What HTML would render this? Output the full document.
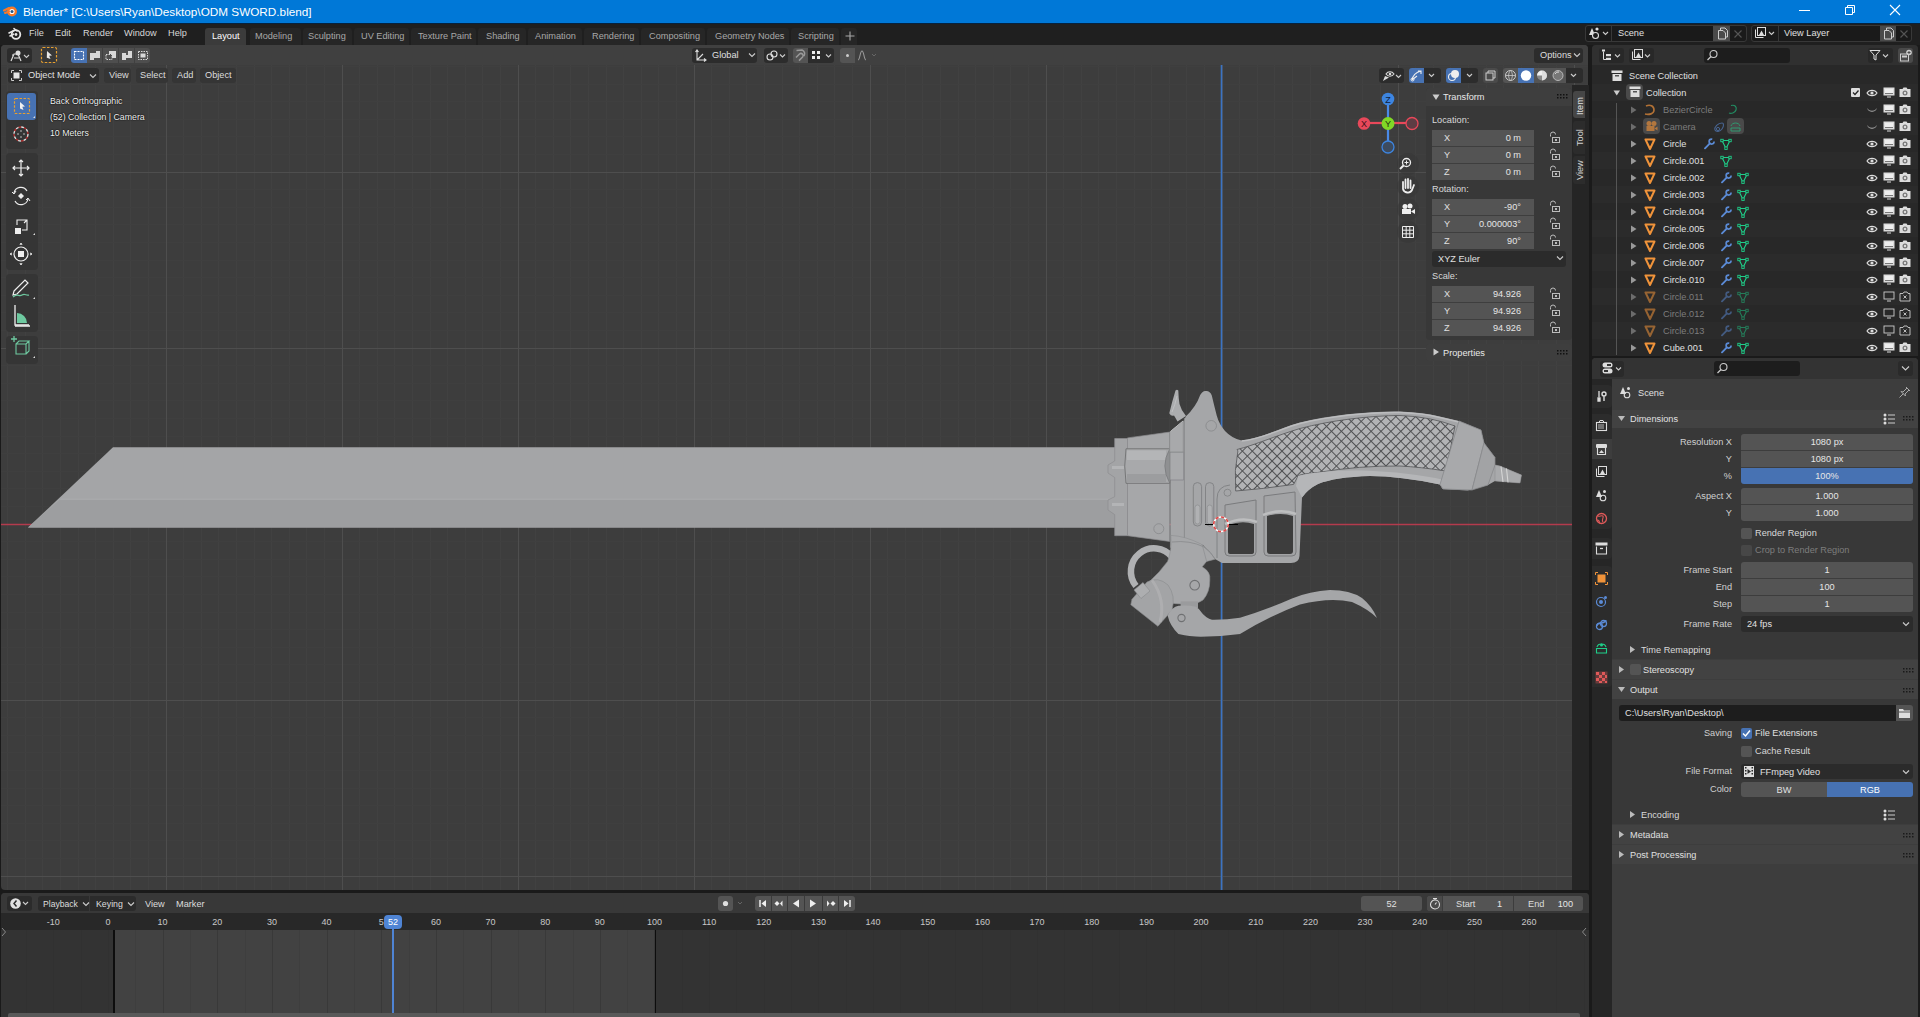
<!DOCTYPE html>
<html><head><meta charset="utf-8">
<style>
*{margin:0;padding:0;box-sizing:border-box}
html,body{width:1920px;height:1017px;overflow:hidden;background:#1a1a1a;font-family:"Liberation Sans",sans-serif;font-size:9.2px;color:#d9d9d9}
.a{position:absolute}
.t{position:absolute;white-space:nowrap;line-height:12px;-webkit-font-smoothing:antialiased}
</style></head><body>
<!-- title bar -->
<div class="a" style="left:0;top:0;width:1920px;height:23px;background:#0078d7"></div>
<svg class="a" style="left:3px;top:3px" width="16" height="16" viewBox="0 0 16 16"><circle cx="9" cy="8.5" r="5" fill="#f5792a"/><circle cx="9" cy="8.5" r="2.6" fill="#fff"/><circle cx="9" cy="8.5" r="1.5" fill="#265787"/><path d="M1 7.5L6 5M2 10L6 8.5" stroke="#f5792a" stroke-width="2" stroke-linecap="round"/></svg>
<div class="t" style="left:23px;top:4px;font-size:11.75px;line-height:15px;color:#fff">Blender* [C:\Users\Ryan\Desktop\ODM SWORD.blend]</div>
<div class="a" style="left:1799px;top:10px;width:11px;height:1px;background:#fff"></div>
<svg class="a" style="left:1843px;top:4px" width="12" height="12"><path d="M2.5 3.5H9.5V10.5H2.5ZM4.5 3.5V1.5H11.5V8.5H9.5" stroke="#fff" fill="none" stroke-width="1"/></svg>
<svg class="a" style="left:1889px;top:4px" width="12" height="12"><path d="M1 1L11 11M11 1L1 11" stroke="#fff" stroke-width="1.1"/></svg>
<!-- top bar -->
<div class="a" style="left:0;top:23px;width:1920px;height:22px;background:#1f1f1f"></div>
<svg class="a" style="left:8px;top:27px" width="14" height="13" viewBox="0 0 14 13"><circle cx="8" cy="7.5" r="4.3" fill="none" stroke="#e6e6e6" stroke-width="1.8"/><circle cx="8" cy="7.5" r="1.4" fill="#e6e6e6"/><path d="M1 6L6 3.5M2 9L5.5 7.2M6 1.5L9 4" stroke="#e6e6e6" stroke-width="1.6" stroke-linecap="round"/></svg>
<div class="t" style="left:29px;top:27px;color:#d8d8d8">File</div>
<div class="t" style="left:55px;top:27px;color:#d8d8d8">Edit</div>
<div class="t" style="left:83px;top:27px;color:#d8d8d8">Render</div>
<div class="t" style="left:124px;top:27px;color:#d8d8d8">Window</div>
<div class="t" style="left:168px;top:27px;color:#d8d8d8">Help</div>
<div class="a" style="left:250px;top:28px;width:51px;height:17px;background:#262626;border-radius:3px 3px 0 0"></div><div class="a" style="left:303px;top:28px;width:49px;height:17px;background:#262626;border-radius:3px 3px 0 0"></div><div class="a" style="left:354px;top:28px;width:55px;height:17px;background:#262626;border-radius:3px 3px 0 0"></div><div class="a" style="left:411px;top:28px;width:65px;height:17px;background:#262626;border-radius:3px 3px 0 0"></div><div class="a" style="left:478px;top:28px;width:48px;height:17px;background:#262626;border-radius:3px 3px 0 0"></div><div class="a" style="left:528px;top:28px;width:54px;height:17px;background:#262626;border-radius:3px 3px 0 0"></div><div class="a" style="left:584px;top:28px;width:55px;height:17px;background:#262626;border-radius:3px 3px 0 0"></div><div class="a" style="left:641px;top:28px;width:64px;height:17px;background:#262626;border-radius:3px 3px 0 0"></div><div class="a" style="left:707px;top:28px;width:82px;height:17px;background:#262626;border-radius:3px 3px 0 0"></div><div class="a" style="left:791px;top:28px;width:48px;height:17px;background:#262626;border-radius:3px 3px 0 0"></div><div class="a" style="left:841px;top:28px;width:16px;height:17px;background:#262626;border-radius:3px 3px 0 0"></div>
<div class="a" style="left:205px;top:28px;width:41px;height:17px;background:#3b3b3b;border-radius:3px 3px 0 0"></div>
<div class="a" style="left:0;top:23px;width:1920px;height:1px;background:#05223f"></div>
<div class="t" style="left:212px;top:30px;color:#fff">Layout</div>
<div class="t" style="left:255px;top:30px;color:#a8a8a8">Modeling</div>
<div class="t" style="left:308px;top:30px;color:#a8a8a8">Sculpting</div>
<div class="t" style="left:361px;top:30px;color:#a8a8a8">UV Editing</div>
<div class="t" style="left:418px;top:30px;color:#a8a8a8">Texture Paint</div>
<div class="t" style="left:486px;top:30px;color:#a8a8a8">Shading</div>
<div class="t" style="left:535px;top:30px;color:#a8a8a8">Animation</div>
<div class="t" style="left:592px;top:30px;color:#a8a8a8">Rendering</div>
<div class="t" style="left:649px;top:30px;color:#a8a8a8">Compositing</div>
<div class="t" style="left:715px;top:30px;color:#a8a8a8">Geometry Nodes</div>
<div class="t" style="left:798px;top:30px;color:#a8a8a8">Scripting</div>
<svg class="a" style="left:844px;top:30px" width="12" height="12"><path d="M6 1.5V10.5M1.5 6H10.5" stroke="#a8a8a8" stroke-width="1.1"/></svg>
<!-- scene selector -->
<div class="a" style="left:1585px;top:25px;width:162px;height:17px;background:#1a1a1a;border:1px solid #383838;border-radius:3px"></div>
<div class="a" style="left:1611px;top:26px;width:1px;height:15px;background:#383838"></div>
<div class="a" style="left:1713px;top:26px;width:17px;height:15px;background:#4a4a4a"></div>
<div class="t" style="left:1618px;top:27px;color:#e0e0e0">Scene</div>
<div class="a" style="left:1751px;top:25px;width:161px;height:17px;background:#1a1a1a;border:1px solid #383838;border-radius:3px"></div>
<div class="a" style="left:1778px;top:26px;width:1px;height:15px;background:#383838"></div>
<div class="a" style="left:1880px;top:26px;width:16px;height:15px;background:#4a4a4a"></div>
<div class="t" style="left:1784px;top:27px;color:#e0e0e0">View Layer</div>
<svg class="a" style="left:1587px;top:26px" width="24" height="15"><path d="M5 2L2 9H8Z" fill="#ddd"/><circle cx="10" cy="3" r="1.6" fill="#ddd"/><circle cx="8.5" cy="9.5" r="3" fill="#1a1a1a" stroke="#ddd" stroke-width="1.1"/><path d="M16 6L18.5 8.5L21 6" stroke="#ccc" stroke-width="1.1" fill="none"/></svg>
<svg class="a" style="left:1715px;top:27px" width="14" height="13"><path d="M3.5 3.5H8L10.5 6V12H3.5Z" fill="none" stroke="#ccc"/><path d="M5.5 3.5V1H10L12.5 3.5V10H10.5" stroke="#ccc" fill="none"/></svg>
<svg class="a" style="left:1733px;top:29px" width="10" height="10"><path d="M1.5 1.5L8.5 8.5M8.5 1.5L1.5 8.5" stroke="#555" stroke-width="1.1"/></svg>
<svg class="a" style="left:1753px;top:26px" width="24" height="15"><rect x="4.5" y="1.5" width="8" height="8" fill="none" stroke="#ddd"/><path d="M6 9L8.5 4.5L11 9Z" fill="#ddd"/><path d="M2.5 3.5V11.5H10.5" stroke="#ddd" fill="none"/><path d="M16 6L18.5 8.5L21 6" stroke="#ccc" stroke-width="1.1" fill="none"/></svg>
<svg class="a" style="left:1881px;top:27px" width="14" height="13"><path d="M3.5 3.5H8L10.5 6V12H3.5Z" fill="none" stroke="#ccc"/><path d="M5.5 3.5V1H10L12.5 3.5V10H10.5" stroke="#ccc" fill="none"/></svg>
<svg class="a" style="left:1899px;top:29px" width="10" height="10"><path d="M1.5 1.5L8.5 8.5M8.5 1.5L1.5 8.5" stroke="#555" stroke-width="1.1"/></svg>

<!-- viewport area -->
<div class="a" id="vp" style="left:1px;top:45px;width:1587px;height:845px;background:#3d3d3d;border-radius:4px;overflow:hidden">
<svg class="a" style="left:-1px;top:-45px" width="1590" height="900">
<path d="M7.6 0V900M25.2 0V900M42.8 0V900M60.4 0V900M78.0 0V900M95.6 0V900M113.2 0V900M130.8 0V900M148.4 0V900M166.0 0V900M183.6 0V900M201.2 0V900M218.8 0V900M236.4 0V900M254.0 0V900M271.6 0V900M289.2 0V900M306.8 0V900M324.4 0V900M342.0 0V900M359.6 0V900M377.2 0V900M394.8 0V900M412.4 0V900M430.0 0V900M447.6 0V900M465.2 0V900M482.8 0V900M500.4 0V900M518.0 0V900M535.6 0V900M553.2 0V900M570.8 0V900M588.4 0V900M606.0 0V900M623.6 0V900M641.2 0V900M658.8 0V900M676.4 0V900M694.0 0V900M711.6 0V900M729.2 0V900M746.8 0V900M764.4 0V900M782.0 0V900M799.6 0V900M817.2 0V900M834.8 0V900M852.4 0V900M870.0 0V900M887.6 0V900M905.2 0V900M922.8 0V900M940.4 0V900M958.0 0V900M975.6 0V900M993.2 0V900M1010.8 0V900M1028.4 0V900M1046.0 0V900M1063.6 0V900M1081.2 0V900M1098.8 0V900M1116.4 0V900M1134.0 0V900M1151.6 0V900M1169.2 0V900M1186.8 0V900M1204.4 0V900M1222.0 0V900M1239.6 0V900M1257.2 0V900M1274.8 0V900M1292.4 0V900M1310.0 0V900M1327.6 0V900M1345.2 0V900M1362.8 0V900M1380.4 0V900M1398.0 0V900M1415.6 0V900M1433.2 0V900M1450.8 0V900M1468.4 0V900M1486.0 0V900M1503.6 0V900M1521.2 0V900M1538.8 0V900M1556.4 0V900M1574.0 0V900" stroke="#414141" stroke-width="1" fill="none" shape-rendering="crispEdges"/>
<path d="M0 13.6H1590M0 31.2H1590M0 48.8H1590M0 66.4H1590M0 84.0H1590M0 101.6H1590M0 119.2H1590M0 136.8H1590M0 154.4H1590M0 172.0H1590M0 189.6H1590M0 207.2H1590M0 224.8H1590M0 242.4H1590M0 260.0H1590M0 277.6H1590M0 295.2H1590M0 312.8H1590M0 330.4H1590M0 348.0H1590M0 365.6H1590M0 383.2H1590M0 400.8H1590M0 418.4H1590M0 436.0H1590M0 453.6H1590M0 471.2H1590M0 488.8H1590M0 506.4H1590M0 524.0H1590M0 541.6H1590M0 559.2H1590M0 576.8H1590M0 594.4H1590M0 612.0H1590M0 629.6H1590M0 647.2H1590M0 664.8H1590M0 682.4H1590M0 700.0H1590M0 717.6H1590M0 735.2H1590M0 752.8H1590M0 770.4H1590M0 788.0H1590M0 805.6H1590M0 823.2H1590M0 840.8H1590M0 858.4H1590M0 876.0H1590M0 893.6H1590" stroke="#3f3f3f" stroke-width="1" fill="none" shape-rendering="crispEdges"/>
<path d="M1574 0V900M1398 0V900M1222 0V900M1046 0V900M870 0V900M694 0V900M518 0V900M342 0V900M166 0V900M0 876H1590M0 700H1590M0 524H1590M0 348H1590M0 172H1590" stroke="#4e4e4e" stroke-width="1" fill="none" shape-rendering="crispEdges"/>
<path d="M0 524.5H1590" stroke="#b33b4d" stroke-width="1.6"/>
<path d="M1221.5 0V900" stroke="#3a73c4" stroke-width="1.6"/>
<defs><pattern id="chk" width="7" height="7" patternUnits="userSpaceOnUse" patternTransform="rotate(45)"><path d="M0 0.5H7M0.5 0V7" stroke="#505153" stroke-width="1"/></pattern></defs>
<g id="sword">
<!-- blade -->
<path d="M28 527.5L113 447.3H1118V527.5Z" fill="#a4a5a7"/>
<path d="M28 527.5L60 499.5H1118V527.5Z" fill="#9d9ea0"/>
<path d="M61 498.5H1118V500H59.5Z" fill="#a8a9ab"/>
<!-- guard plate -->
<path d="M1114.7 438.5H1127.5V535.7H1114.7V514.6L1108 510L1108 500L1114.7 496.7V477.5L1108 473L1108 465L1114.7 461Z" fill="#a3a4a6" stroke="#8c8d8f" stroke-width="0.7"/>
<path d="M1112 466H1124V469H1112ZM1112 503H1124V506H1112Z" fill="#b3b4b6"/>
<!-- rear block -->
<path d="M1127.5 437.9L1169.7 432.1V541.4L1127.5 535.7Z" fill="#a6a7a9" stroke="#8c8d8f" stroke-width="0.7"/>
<!-- hook -->
<path d="M1169.3 413.2Q1172 402 1175.5 390.5Q1177 389 1178.3 390.5Q1178.5 398 1179.5 404Q1181 410 1186 416L1177.5 421.5Q1175 417 1174 415.5Q1171 416.5 1169.3 413.2Z" fill="#acadaf"/>
<path d="M1172 412Q1175 405 1177 396" stroke="#c0c1c3" stroke-width="1" fill="none"/>
<!-- main body + grip + trigger frame -->
<path d="M1183.5 421.3L1185.8 416.5Q1196 407 1200.2 395.1Q1203 390.5 1205.5 391Q1210 390.5 1211.8 395.5Q1214 405 1216.8 415.8Q1219 424 1225 431Q1232 438.5 1241.6 440.5C1262 438 1280 428 1300 422.5C1330 415 1370 411 1400 411.5Q1425 412.5 1437.5 416L1459 421L1481 430L1484 443L1495 457.5V465L1500 466L1521.5 475L1520 483L1495 481L1488 485L1467.5 490.5L1442.5 489L1440 484.5Q1400 476 1370 476Q1335 477 1318 484Q1308 489 1302 497.4L1299.5 556Q1299 563 1291 563H1222L1215 559Q1210 552 1203 545L1170.3 547.8V431.5Z" fill="#a5a6a8"/>
<!-- checker region -->
<path d="M1237 449.5C1255 445 1275 436 1300 428.5C1330 420.5 1370 415.5 1400 415.5Q1430 416.5 1455 426L1446 471Q1420 467 1400 466Q1360 465.5 1317.4 472.5Q1300 474 1298 476L1293.6 484.4Q1263 489 1235.7 491Q1234 470 1237.9 450.9Z" fill="#b2b3b5" stroke="#5e5f61" stroke-width="0.9"/>
<path d="M1237 449.5C1255 445 1275 436 1300 428.5C1330 420.5 1370 415.5 1400 415.5Q1430 416.5 1455 426L1446 471Q1420 467 1400 466Q1360 465.5 1317.4 472.5Q1300 474 1298 476L1293.6 484.4Q1263 489 1235.7 491Q1234 470 1237.9 450.9Z" fill="url(#chk)"/>
<!-- grip top highlight -->
<path d="M1241.6 441C1262 439 1280 429 1300 423.5C1330 416 1370 412 1400 412.5Q1425 413.5 1437.5 417L1459 422" stroke="#bcbdbf" stroke-width="1.4" fill="none"/>
<!-- lower sweep band -->
<path d="M1298 476Q1320 470 1362 470.5Q1410 472 1444 480L1440 484.5Q1400 476 1370 476Q1335 477 1318 484Q1308 489 1302 497.4L1296 486Z" fill="#b5b6b8"/>
<!-- pommel -->
<path d="M1459 421L1481 430L1484 443L1472 490L1443 489L1440 484.5Z" fill="#a8a9ab" stroke="#88898b" stroke-width="0.8"/>
<path d="M1484 443L1495 457.5V465L1488 485L1472 490Z" fill="#a2a3a5" stroke="#88898b" stroke-width="0.8"/>
<path d="M1495 465L1500 466L1521.5 475L1520 483L1495 481Z" fill="#a9aaac" stroke="#8a8b8d" stroke-width="0.5"/>
<path d="M1501 466.5L1503 482M1506.5 468.5L1508 482.5" stroke="#d5d5d5" stroke-width="1.1"/>
<!-- trigger guard windows -->
<path d="M1225 505L1256 500V552Q1256 556 1252 556H1229Q1225 556 1225 552Z" fill="#a2a3a5" stroke="#7a7b7d" stroke-width="1"/>
<path d="M1228 525Q1242 520 1254 524V552Q1254 554 1251 554H1230Q1228 554 1228 552Z" fill="#3d3d3d"/>
<path d="M1264 496L1295 492L1296 552Q1296 556 1292 556H1268Q1264 556 1264 552Z" fill="#a2a3a5" stroke="#7a7b7d" stroke-width="1"/>
<path d="M1267 516Q1281 512 1293 516V551Q1293 554 1290 554H1270Q1267 554 1267 551Z" fill="#3d3d3d"/>
<path d="M1225 524Q1242 516 1257 522M1263 515Q1281 508 1296 514" stroke="#bdbebf" stroke-width="2.5" fill="none"/>
<path d="M1217 558V499Q1217 486 1230 485" stroke="#7e7f81" stroke-width="0.9" fill="none"/>
<!-- cylinder -->
<path d="M1169.7 452H1183.7V480H1169.7Z" fill="#a9aaac" stroke="#85868a" stroke-width="0.8"/>
<path d="M1126 448.8H1169.7V483.3H1126Q1123.5 466 1126 448.8Z" fill="#a8a9ab" stroke="#6f7072" stroke-width="0.9"/>
<path d="M1127 450.5H1166V460H1127Z" fill="#b4b5b7"/>
<path d="M1127 474H1166V482H1127Z" fill="#9c9d9f"/>
<path d="M1169.7 449Q1160 466 1169.7 483" fill="#8f9092" stroke="#7a7b7d" stroke-width="0.8"/>
<path d="M1169.7 432.1L1183.3 421V452H1169.7Z" fill="#a8a9ab" stroke="#88898b" stroke-width="0.7"/>
<!-- body detail lines -->
<path d="M1184.4 418V547" stroke="#88898b" stroke-width="0.9" fill="none"/><path d="M1170.5 431.5L1183 421" stroke="#bdbebf" stroke-width="1" fill="none"/>
<rect x="1193.3" y="482.6" width="8.3" height="43.4" rx="4" fill="none" stroke="#7f8082" stroke-width="0.9"/>
<rect x="1205.5" y="482.6" width="8.3" height="43.4" rx="4" fill="none" stroke="#7f8082" stroke-width="0.9"/>
<rect x="1195" y="505" width="5" height="19" rx="2.5" fill="#b0b1b3" stroke="#88898b" stroke-width="0.6"/>
<rect x="1207.2" y="505" width="5" height="19" rx="2.5" fill="#b0b1b3" stroke="#88898b" stroke-width="0.6"/>
<circle cx="1211.2" cy="425.8" r="5.3" fill="none" stroke="#8a8b8d" stroke-width="0.9"/>
<circle cx="1158.8" cy="528.7" r="5" fill="none" stroke="#88898b" stroke-width="0.8"/>
<circle cx="1227.5" cy="492.7" r="3.5" fill="none" stroke="#7f8082" stroke-width="0.8"/>
<!-- ring -->
<path d="M1172 557A21 21 0 1 0 1136 586" fill="none" stroke="#b0b1b3" stroke-width="6.5"/>
<!-- lever housing lobe -->
<path d="M1170.9 535.4Q1185 536 1201 544Q1210 550 1215.2 559.2L1206.6 561.4L1202.2 566.8Q1211 572 1209.8 580Q1210 592 1203 600Q1194 606 1182 604Q1168 604 1158 598L1149 582Q1160 572 1167.6 561.4Q1172 550 1170.9 535.4Z" fill="#a6a7a9" stroke="#8d8e90" stroke-width="0.6"/>
<path d="M1172 542Q1190 540 1204 547Q1212 553 1215 559" stroke="#88898b" stroke-width="0.8" fill="none"/>
<path d="M1202 544L1206.6 561.4" stroke="#8d8e90" stroke-width="0.7" fill="none"/>
<circle cx="1194.7" cy="585.2" r="4.8" fill="none" stroke="#6f7072" stroke-width="1.1"/>
<!-- clamp block -->
<path d="M1132 599.3L1147 582Q1158 576 1168 585Q1176 596 1172 610L1166.5 616.6L1157.9 626.3L1130.8 604.7Z" fill="#a3a4a6" stroke="#8a8b8d" stroke-width="0.6"/>
<path d="M1152 580Q1166 600 1160 622" stroke="#b5b6b8" stroke-width="3" fill="none" opacity="0.6"/>
<path d="M1134 590L1143 582.5L1150 591L1141 598.5Z" fill="#adaeb0" stroke="#88898b" stroke-width="0.6"/>
<path d="M1180.6 601.4H1198V608H1180.6Z" fill="#9a9b9d"/>
<!-- lever -->
<path d="M1167.6 615.5Q1172 607 1178.4 605.8Q1188 605 1195.8 606.8Q1200 609 1202.2 613.3Q1206 618 1212 619.8Q1226 620 1240 617.7Q1266 610 1292 598.5Q1310 591 1330 590Q1350 590 1362 598Q1372 606 1377 618Q1368 609 1352 602Q1330 597 1300 604.5Q1272 615 1240 633.9Q1218 637 1195.8 636.6Q1182 635 1178.4 633.9Q1170 626 1167.6 615.5Z" fill="#a5a6a8"/>
<circle cx="1181.5" cy="618" r="3.6" fill="none" stroke="#6f7072" stroke-width="1.1"/>
<!-- 3d cursor -->
<circle cx="1221" cy="524.3" r="7.3" fill="none" stroke="#fff" stroke-width="1.5"/>
<circle cx="1221" cy="524.3" r="7.3" fill="none" stroke="#e04848" stroke-width="1.7" stroke-dasharray="3.2 2.5"/>
<path d="M1205 524.5H1213M1229 524.5H1238" stroke="#000" stroke-width="1.2"/>
</g>
</svg>
</div>
<!-- viewport header rows -->
<div class="a" style="left:1px;top:45px;width:1587px;height:20px;background:#404040;border-radius:4px 4px 0 0"></div>
<div class="a" style="left:7px;top:48px;width:25px;height:15px;background:#2c2c2c;border-radius:3px"></div>
<svg class="a" style="left:9px;top:49px" width="22" height="13"><path d="M2 12L5 5L9 5L12 12M5 9H10M3 6H4" stroke="#ddd" stroke-width="1.2" fill="none"/><circle cx="9" cy="4" r="2.5" fill="#ddd"/><path d="M15 6L17.5 8.5L20 6" stroke="#ccc" stroke-width="1.1" fill="none"/></svg>
<svg class="a" style="left:40px;top:46px" width="18" height="18"><rect x="1.5" y="1.5" width="15" height="15" rx="1.5" fill="#383838" stroke="#e8a030" stroke-width="1.2" stroke-dasharray="2.5 1.5"/><path d="M7 5L12 9.5L9.2 9.8L10.5 13L6.8 11.7L7 5Z" fill="#e8e8e8"/></svg>
<div class="a" style="left:71px;top:48px;width:16px;height:15px;background:#4772b3;border-radius:3px 0 0 3px"></div>
<div class="a" style="left:87px;top:48px;width:15px;height:15px;background:#4e4e4e"></div>
<div class="a" style="left:103px;top:48px;width:15px;height:15px;background:#4e4e4e"></div>
<div class="a" style="left:119px;top:48px;width:15px;height:15px;background:#4e4e4e"></div>
<div class="a" style="left:135px;top:48px;width:15px;height:15px;background:#4e4e4e;border-radius:0 3px 3px 0"></div>
<svg class="a" style="left:71px;top:48px" width="80" height="15"><rect x="3.5" y="3.5" width="9" height="8" fill="none" stroke="#fff" stroke-width="1.1" stroke-dasharray="2 1"/>
<path d="M19 5H25V3H29V10H23V12H19Z" fill="#d8d8d8"/>
<rect x="35" y="6.5" width="6" height="5" fill="none" stroke="#d8d8d8" stroke-dasharray="1.5 1"/><path d="M38 3H45V10H41V6H38Z" fill="#d8d8d8"/>
<path d="M51 5H57V3H61V10H55V12H51Z" fill="#d8d8d8"/><rect x="55" y="5" width="2" height="2" fill="#555"/>
<rect x="67.5" y="3.5" width="9" height="8" fill="none" stroke="#d8d8d8" stroke-dasharray="1.5 1"/><rect x="69.5" y="5.5" width="5" height="4" fill="#d8d8d8"/></svg>
<!-- transform orientation etc -->
<div class="a" style="left:692px;top:48px;width:65px;height:15px;background:#2c2c2c;border-radius:3px"></div>
<svg class="a" style="left:694px;top:49px" width="14" height="13"><path d="M3 1V11H12M3 11L9 5M1.5 3L3 1L4.5 3M10 9.5L12 11L10 12.5" stroke="#ddd" stroke-width="1.1" fill="none"/></svg>
<div class="t" style="left:712px;top:49px;color:#e0e0e0">Global</div>
<svg class="a" style="left:748px;top:52px" width="8" height="6"><path d="M1 1.5L4 4.5L7 1.5" stroke="#ccc" stroke-width="1.1" fill="none"/></svg>
<div class="a" style="left:764px;top:48px;width:24px;height:15px;background:#2c2c2c;border-radius:3px"></div>
<svg class="a" style="left:765px;top:49px" width="22" height="13"><circle cx="5" cy="8" r="3" fill="none" stroke="#ddd" stroke-width="1.1"/><circle cx="9" cy="5" r="3" fill="none" stroke="#ddd" stroke-width="1.1"/><path d="M15 5.5L17.5 8L20 5.5" stroke="#ccc" stroke-width="1.1" fill="none"/></svg>
<div class="a" style="left:793px;top:48px;width:15px;height:15px;background:#545454;border-radius:3px 0 0 3px"></div>
<svg class="a" style="left:794px;top:49px" width="13" height="13"><path d="M3 9.5L6.5 6A2.2 2.2 0 0 1 9.6 9.1L6 12.6M3.5 2.5L9 2A4 4 0 0 1 11 8" stroke="#999" stroke-width="1.5" fill="none" transform="translate(-1,-1)"/></svg>
<div class="a" style="left:808px;top:48px;width:26px;height:15px;background:#2c2c2c;border-radius:0 3px 3px 0"></div>
<svg class="a" style="left:810px;top:49px" width="24" height="13"><rect x="2" y="2" width="3" height="3" fill="#eee"/><rect x="7" y="2" width="3" height="3" fill="#eee"/><rect x="2" y="7" width="3" height="3" fill="#eee"/><rect x="7" y="7" width="3" height="3" fill="#eee"/><path d="M16 5.5L18.5 8L21 5.5" stroke="#ccc" stroke-width="1.1" fill="none"/></svg>
<div class="a" style="left:840px;top:48px;width:15px;height:15px;background:#545454;border-radius:3px 0 0 3px"></div>
<svg class="a" style="left:840px;top:48px" width="44" height="15"><circle cx="7.5" cy="7.5" r="1.5" fill="#ccc"/><path d="M18 12C20 12 20 3 22 3C24 3 24 12 26 12" stroke="#999" stroke-width="1.1" fill="none"/><path d="M32 6L34 8L36 6" stroke="#666" stroke-width="1" fill="none"/></svg>
<div class="a" style="left:1534px;top:48px;width:49px;height:15px;background:#2c2c2c;border-radius:3px"></div>
<div class="t" style="left:1540px;top:49px;color:#ddd">Options</div>
<svg class="a" style="left:1573px;top:52px" width="8" height="6"><path d="M1 1.5L4 4.5L7 1.5" stroke="#ccc" stroke-width="1.1" fill="none"/></svg>
<!-- row 2 -->
<div class="a" style="left:8px;top:68px;width:91px;height:15px;background:#2c2c2c;border-radius:3px"></div>
<svg class="a" style="left:10px;top:69px" width="13" height="13"><path d="M1.5 4V1.5H4M9 1.5H11.5V4M11.5 9V11.5H9M4 11.5H1.5V9" stroke="#ccc" fill="none"/><rect x="3.5" y="3.5" width="6" height="6" fill="#e6e6e6"/></svg>
<div class="t" style="left:28px;top:69px;color:#e0e0e0">Object Mode</div>
<svg class="a" style="left:89px;top:73px" width="8" height="6"><path d="M1 1.5L4 4.5L7 1.5" stroke="#ccc" stroke-width="1.1" fill="none"/></svg>
<div class="a" style="left:104px;top:68px;width:27px;height:15px;background:#353535;border-radius:3px"></div>
<div class="t" style="left:109px;top:69px;color:#ddd">View</div>
<div class="a" style="left:136px;top:68px;width:32px;height:15px;background:#353535;border-radius:3px"></div>
<div class="t" style="left:140px;top:69px;color:#ddd">Select</div>
<div class="a" style="left:172px;top:68px;width:24px;height:15px;background:#353535;border-radius:3px"></div>
<div class="t" style="left:177px;top:69px;color:#ddd">Add</div>
<div class="a" style="left:200px;top:68px;width:36px;height:15px;background:#353535;border-radius:3px"></div>
<div class="t" style="left:205px;top:69px;color:#ddd">Object</div>
<!-- right row2 -->
<div class="a" style="left:1379px;top:68px;width:25px;height:15px;background:#2c2c2c;border-radius:3px"></div>
<svg class="a" style="left:1380px;top:68px" width="24" height="15"><path d="M3 13L5 8L9 9.5Z" fill="#ddd"/><path d="M6 6C8 3 12 3 14 6C12 9 8 9 6 6Z" fill="none" stroke="#ddd" stroke-width="1.1"/><circle cx="10" cy="6" r="1.3" fill="#ddd"/><path d="M16 7L18.5 9.5L21 7" stroke="#ccc" stroke-width="1.1" fill="none"/></svg>
<div class="a" style="left:1409px;top:68px;width:15px;height:15px;background:#4772b3;border-radius:3px 0 0 3px"></div>
<div class="a" style="left:1424px;top:68px;width:17px;height:15px;background:#2c2c2c;border-radius:0 3px 3px 0"></div>
<svg class="a" style="left:1409px;top:68px" width="32" height="15"><path d="M3 12C4 7 8 4 12 3M9 3H12V6M3 12L8 8" stroke="#eee" stroke-width="1.1" fill="none"/><circle cx="3.5" cy="11.5" r="1.5" fill="none" stroke="#eee"/><path d="M20 6L22.5 8.5L25 6" stroke="#ccc" stroke-width="1.1" fill="none"/></svg>
<div class="a" style="left:1446px;top:68px;width:15px;height:15px;background:#4772b3;border-radius:3px 0 0 3px"></div>
<div class="a" style="left:1461px;top:68px;width:17px;height:15px;background:#2c2c2c;border-radius:0 3px 3px 0"></div>
<svg class="a" style="left:1446px;top:68px" width="32" height="15"><circle cx="9" cy="6" r="4" fill="#eee"/><circle cx="6" cy="9" r="3.5" fill="none" stroke="#eee" stroke-width="1.1"/><path d="M21 6L23.5 8.5L26 6" stroke="#ccc" stroke-width="1.1" fill="none"/></svg>
<div class="a" style="left:1483px;top:68px;width:15px;height:15px;background:#4a4a4a;border-radius:3px"></div>
<svg class="a" style="left:1483px;top:68px" width="15" height="15"><rect x="3" y="5" width="7" height="7" fill="none" stroke="#ccc"/><path d="M5 5V3H12V10H10" stroke="#ccc" fill="none"/></svg>
<div class="a" style="left:1503px;top:68px;width:15px;height:15px;background:#545454;border-radius:3px 0 0 3px"></div>
<div class="a" style="left:1518px;top:68px;width:16px;height:15px;background:#4772b3"></div>
<div class="a" style="left:1534px;top:68px;width:16px;height:15px;background:#545454"></div>
<div class="a" style="left:1550px;top:68px;width:16px;height:15px;background:#545454"></div>
<div class="a" style="left:1566px;top:68px;width:17px;height:15px;background:#2c2c2c;border-radius:0 3px 3px 0"></div>
<svg class="a" style="left:1503px;top:68px" width="80" height="15"><circle cx="7.5" cy="7.5" r="5" fill="none" stroke="#ccc"/><path d="M2.5 7.5H12.5M7.5 2.5C5 5 5 10 7.5 12.5M7.5 2.5C10 5 10 10 7.5 12.5" stroke="#ccc" fill="none" stroke-width="0.8"/>
<circle cx="23" cy="7.5" r="5.2" fill="#fff"/>
<circle cx="39" cy="7.5" r="5" fill="#888"/><path d="M39 2.5A5 5 0 0 1 39 12.5Z" fill="#ddd"/><path d="M39 2.5A5 5 0 0 0 34 7.5H39Z" fill="#eee"/>
<circle cx="55" cy="7.5" r="5" fill="#777" stroke="#ccc" stroke-width="0.8"/><path d="M52 6A3.5 3.5 0 0 1 56 4" stroke="#ddd" fill="none"/>
<path d="M68 6L70.5 8.5L73 6" stroke="#ccc" stroke-width="1.1" fill="none"/></svg>
<!-- toolbar -->
<div class="a" style="left:6px;top:91px;width:32px;height:58px;background:#353535;border-radius:4px"></div>
<div class="a" style="left:6px;top:153px;width:32px;height:117px;background:#353535;border-radius:4px"></div>
<div class="a" style="left:6px;top:274px;width:32px;height:58px;background:#353535;border-radius:4px"></div>
<div class="a" style="left:6px;top:336px;width:32px;height:28px;background:#353535;border-radius:4px"></div>
<div class="a" style="left:7px;top:93px;width:29px;height:27px;background:#4772b3;border-radius:3px"></div>
<svg class="a" style="left:0;top:85px" width="40" height="285">
<rect x="14.5" y="13.5" width="15" height="15" rx="1" fill="none" stroke="#e8a030" stroke-width="1.2" stroke-dasharray="2.5 1.5"/><path d="M20 17L25 21.5L22.3 21.8L23.5 25L20 23.5Z" fill="#f0f0f0"/><path d="M33 33L35 31V33Z" fill="#ddd"/>
<circle cx="21" cy="49" r="7" fill="none" stroke="#e0e0e0" stroke-width="1.3" stroke-dasharray="3 2.5"/><circle cx="21" cy="49" r="7" fill="none" stroke="#c03030" stroke-width="1.3" stroke-dasharray="2.5 3" stroke-dashoffset="2.7"/><path d="M21 45V47M21 51V53M17 49H19M23 49H25" stroke="#bbb"/>
<path d="M21 75V91M13 83H29M19 77L21 75L23 77M19 89L21 91L23 89M15 81L13 83L15 85M27 81L29 83L27 85" stroke="#eee" stroke-width="1.2" fill="none"/>
<path d="M14 108A7 7 0 0 1 27 106M28 114A7 7 0 0 1 15 116" stroke="#eee" stroke-width="1.2" fill="none"/><path d="M21 108L24 111L21 114L18 111Z" fill="#eee"/><path d="M12 107L14 109L16 106M26 115L28 113L30 116" stroke="#eee" fill="none"/>
<rect x="15" y="143" width="6" height="6" fill="#eee"/><path d="M17 140V135H27V145H22M24 138L27 135" stroke="#eee" stroke-width="1.1" fill="none"/><path d="M33 150L35 148V150Z" fill="#ddd"/>
<circle cx="21" cy="169" r="7" fill="none" stroke="#eee" stroke-width="1.2"/><rect x="18" y="166" width="6" height="6" fill="#eee"/><path d="M20 160L21 158L22 160M20 178L21 180L22 178M12 168L10 169L12 170M30 168L32 169L30 170" stroke="#eee" fill="none"/>
<path d="M14 206L25 195L28 198L17 209L13 210Z" fill="none" stroke="#eee" stroke-width="1.2"/><path d="M13 212C17 208 19 212 22 210C25 208 26 211 29 210" stroke="#6ec9a0" stroke-width="1.2" fill="none"/><path d="M33 214L35 212V214Z" fill="#ddd"/>
<path d="M15 220V240H29" stroke="#eee" stroke-width="1.3" fill="none"/><path d="M17 238V228A10 10 0 0 1 27 238Z" fill="#6ec9a0"/><path d="M15 241H30" stroke="#eee" stroke-width="1.5"/>
<path d="M16 259H26V269H16Z M16 259L19 256H29L26 259 M29 256V266L26 269" fill="none" stroke="#6ec9a0" stroke-width="1.1"/><path d="M14 251V257M11 254H17" stroke="#6ec9a0" stroke-width="1.3"/><path d="M33 273L35 271V273Z" fill="#ddd"/>
</svg>
<!-- overlay text -->
<div class="t" style="left:50px;top:95px;color:#f4f4f4;font-size:8.75px;text-shadow:0 0 1.5px #000,0 0 1px #000">Back Orthographic</div>
<div class="t" style="left:50px;top:111px;color:#f4f4f4;font-size:8.75px;text-shadow:0 0 1.5px #000,0 0 1px #000">(52) Collection | Camera</div>
<div class="t" style="left:50px;top:127px;color:#f4f4f4;font-size:8.75px;text-shadow:0 0 1.5px #000,0 0 1px #000">10 Meters</div>
<!-- nav gizmo -->
<svg class="a" style="left:1350px;top:88px" width="75" height="155">
<path d="M38 11V35M14 35H62" stroke="#d0d0d0" stroke-width="0"/>
<path d="M38 35V11" stroke="#4a8ae8" stroke-width="2.2"/>
<path d="M38 35V57" stroke="#4a8ae8" stroke-width="2.2"/>
<path d="M38 35H14" stroke="#e8485a" stroke-width="2.2"/>
<path d="M38 35H62" stroke="#e8485a" stroke-width="2.2"/>
<circle cx="38" cy="59" r="6" fill="#3d4b5e" stroke="#3d85e0" stroke-width="1.3"/>
<circle cx="62" cy="35.5" r="6" fill="#5e3d44" stroke="#e8485a" stroke-width="1.3"/>
<circle cx="38" cy="11" r="6.3" fill="#3d85e0"/>
<circle cx="14" cy="35.5" r="6.3" fill="#e8485a"/>
<circle cx="38" cy="35.5" r="6.5" fill="#80d826"/>
<text x="38" y="14.5" font-size="9" text-anchor="middle" fill="#10203a" font-family="Liberation Sans">Z</text>
<text x="14" y="39" font-size="9" text-anchor="middle" fill="#401018" font-family="Liberation Sans">X</text>
<text x="38" y="39" font-size="9" text-anchor="middle" fill="#203010" font-family="Liberation Sans">Y</text>
<g transform="translate(0,0)">
<circle cx="58" cy="76" r="11" fill="#363636" fill-opacity="0.5"/>
<circle cx="56.5" cy="74.5" r="4" fill="none" stroke="#eee" stroke-width="1.3"/><path d="M53.5 77.5L50 81" stroke="#eee" stroke-width="2"/><path d="M56.5 72.5V76.5M54.5 74.5H58.5" stroke="#eee"/>
<circle cx="58" cy="98.5" r="11" fill="#363636" fill-opacity="0.5"/>
<path d="M53 101V94M55.5 100V91.5M58 100V91M60.5 100V92.5M53 101C54 105 60 106 62 102L64 97" stroke="#eee" stroke-width="1.8" fill="none" stroke-linecap="round"/>
<circle cx="58" cy="121.5" r="11" fill="#363636" fill-opacity="0.5"/>
<circle cx="55" cy="118.5" r="2.5" fill="#eee"/><circle cx="60" cy="118" r="2.5" fill="#eee"/><rect x="52" y="121" width="9" height="5" fill="#eee"/><path d="M61 123.5L65 121V126Z" fill="#eee"/>
<circle cx="58" cy="144" r="11" fill="#363636" fill-opacity="0.5"/>
<path d="M52.5 138.5H63.5V149.5H52.5ZM52.5 142.2H63.5M52.5 145.8H63.5M56.2 138.5V149.5M59.8 138.5V149.5" stroke="#eee" fill="none"/>
</g>
</svg>
<!-- sidebar -->
<div class="a" style="left:1572px;top:85px;width:17px;height:805px;background:#252525"></div>
<div class="a" style="left:1573px;top:91px;width:12px;height:27px;background:#464646;border-radius:3px 0 0 3px"></div>
<div class="a" style="left:1573px;top:121px;width:12px;height:33px;background:#2c2c2c;border-radius:3px 0 0 3px"></div>
<div class="a" style="left:1573px;top:156px;width:12px;height:28px;background:#2c2c2c;border-radius:3px 0 0 3px"></div>
<div class="t" style="left:1573.5px;top:114.5px;color:#e0e0e0;transform:rotate(-90deg);transform-origin:0 0">Item</div>
<div class="t" style="left:1573.5px;top:145.5px;color:#d0d0d0;transform:rotate(-90deg);transform-origin:0 0">Tool</div>
<div class="t" style="left:1573.5px;top:179.5px;color:#d0d0d0;transform:rotate(-90deg);transform-origin:0 0">View</div>
<div class="a" style="left:1426px;top:88px;width:146px;height:252px;background:#383838;border-radius:4px"></div>
<div class="a" style="left:1426px;top:88px;width:146px;height:18px;background:#3e3e3e;border-radius:4px 4px 0 0"></div>
<svg class="a" style="left:1431px;top:92px" width="10" height="10"><path d="M1.5 2.5H8.5L5 8Z" fill="#ccc"/></svg>
<div class="t" style="left:1443px;top:91px;color:#e8e8e8">Transform</div>
<svg class="a" style="left:1556px;top:93px" width="14" height="8"><g fill="#111"><rect x="1" y="1" width="1.5" height="1.5"/><rect x="1" y="4" width="1.5" height="1.5"/><rect x="4" y="1" width="1.5" height="1.5"/><rect x="4" y="4" width="1.5" height="1.5"/><rect x="7" y="1" width="1.5" height="1.5"/><rect x="7" y="4" width="1.5" height="1.5"/><rect x="10" y="1" width="1.5" height="1.5"/><rect x="10" y="4" width="1.5" height="1.5"/></g></svg>
<div class="t" style="left:1432px;top:114px;color:#d8d8d8">Location:</div>
<div class="t" style="left:1432px;top:183px;color:#d8d8d8">Rotation:</div>
<div class="t" style="left:1432px;top:270px;color:#d8d8d8">Scale:</div>
<div class="a" style="left:1432px;top:130px;width:102px;height:16px;background:#545454"></div>
<div class="t" style="left:1444px;top:132px;color:#e0e0e0">X</div>
<div class="t" style="left:1434px;top:132px;width:87px;text-align:right;color:#e6e6e6">0 m</div>
<svg class="a" style="left:1548px;top:131px" width="13" height="13"><path d="M2.5 5.5V3.5A2.5 2.5 0 0 1 7.5 3.5" stroke="#bbb" fill="none" stroke-width="1"/><rect x="4.5" y="6.5" width="7" height="5" fill="none" stroke="#bbb"/><rect x="7" y="8" width="2" height="2" fill="#bbb"/></svg><div class="a" style="left:1432px;top:147px;width:102px;height:16px;background:#545454"></div>
<div class="t" style="left:1444px;top:149px;color:#e0e0e0">Y</div>
<div class="t" style="left:1434px;top:149px;width:87px;text-align:right;color:#e6e6e6">0 m</div>
<svg class="a" style="left:1548px;top:148px" width="13" height="13"><path d="M2.5 5.5V3.5A2.5 2.5 0 0 1 7.5 3.5" stroke="#bbb" fill="none" stroke-width="1"/><rect x="4.5" y="6.5" width="7" height="5" fill="none" stroke="#bbb"/><rect x="7" y="8" width="2" height="2" fill="#bbb"/></svg><div class="a" style="left:1432px;top:164px;width:102px;height:16px;background:#545454"></div>
<div class="t" style="left:1444px;top:166px;color:#e0e0e0">Z</div>
<div class="t" style="left:1434px;top:166px;width:87px;text-align:right;color:#e6e6e6">0 m</div>
<svg class="a" style="left:1548px;top:165px" width="13" height="13"><path d="M2.5 5.5V3.5A2.5 2.5 0 0 1 7.5 3.5" stroke="#bbb" fill="none" stroke-width="1"/><rect x="4.5" y="6.5" width="7" height="5" fill="none" stroke="#bbb"/><rect x="7" y="8" width="2" height="2" fill="#bbb"/></svg><div class="a" style="left:1432px;top:199px;width:102px;height:16px;background:#545454"></div>
<div class="t" style="left:1444px;top:201px;color:#e0e0e0">X</div>
<div class="t" style="left:1434px;top:201px;width:87px;text-align:right;color:#e6e6e6">-90°</div>
<svg class="a" style="left:1548px;top:200px" width="13" height="13"><path d="M2.5 5.5V3.5A2.5 2.5 0 0 1 7.5 3.5" stroke="#bbb" fill="none" stroke-width="1"/><rect x="4.5" y="6.5" width="7" height="5" fill="none" stroke="#bbb"/><rect x="7" y="8" width="2" height="2" fill="#bbb"/></svg><div class="a" style="left:1432px;top:216px;width:102px;height:16px;background:#545454"></div>
<div class="t" style="left:1444px;top:218px;color:#e0e0e0">Y</div>
<div class="t" style="left:1434px;top:218px;width:87px;text-align:right;color:#e6e6e6">0.000003°</div>
<svg class="a" style="left:1548px;top:217px" width="13" height="13"><path d="M2.5 5.5V3.5A2.5 2.5 0 0 1 7.5 3.5" stroke="#bbb" fill="none" stroke-width="1"/><rect x="4.5" y="6.5" width="7" height="5" fill="none" stroke="#bbb"/><rect x="7" y="8" width="2" height="2" fill="#bbb"/></svg><div class="a" style="left:1432px;top:233px;width:102px;height:16px;background:#545454"></div>
<div class="t" style="left:1444px;top:235px;color:#e0e0e0">Z</div>
<div class="t" style="left:1434px;top:235px;width:87px;text-align:right;color:#e6e6e6">90°</div>
<svg class="a" style="left:1548px;top:234px" width="13" height="13"><path d="M2.5 5.5V3.5A2.5 2.5 0 0 1 7.5 3.5" stroke="#bbb" fill="none" stroke-width="1"/><rect x="4.5" y="6.5" width="7" height="5" fill="none" stroke="#bbb"/><rect x="7" y="8" width="2" height="2" fill="#bbb"/></svg><div class="a" style="left:1432px;top:286px;width:102px;height:16px;background:#545454"></div>
<div class="t" style="left:1444px;top:288px;color:#e0e0e0">X</div>
<div class="t" style="left:1434px;top:288px;width:87px;text-align:right;color:#e6e6e6">94.926</div>
<svg class="a" style="left:1548px;top:287px" width="13" height="13"><path d="M2.5 5.5V3.5A2.5 2.5 0 0 1 7.5 3.5" stroke="#bbb" fill="none" stroke-width="1"/><rect x="4.5" y="6.5" width="7" height="5" fill="none" stroke="#bbb"/><rect x="7" y="8" width="2" height="2" fill="#bbb"/></svg><div class="a" style="left:1432px;top:303px;width:102px;height:16px;background:#545454"></div>
<div class="t" style="left:1444px;top:305px;color:#e0e0e0">Y</div>
<div class="t" style="left:1434px;top:305px;width:87px;text-align:right;color:#e6e6e6">94.926</div>
<svg class="a" style="left:1548px;top:304px" width="13" height="13"><path d="M2.5 5.5V3.5A2.5 2.5 0 0 1 7.5 3.5" stroke="#bbb" fill="none" stroke-width="1"/><rect x="4.5" y="6.5" width="7" height="5" fill="none" stroke="#bbb"/><rect x="7" y="8" width="2" height="2" fill="#bbb"/></svg><div class="a" style="left:1432px;top:320px;width:102px;height:16px;background:#545454"></div>
<div class="t" style="left:1444px;top:322px;color:#e0e0e0">Z</div>
<div class="t" style="left:1434px;top:322px;width:87px;text-align:right;color:#e6e6e6">94.926</div>
<svg class="a" style="left:1548px;top:321px" width="13" height="13"><path d="M2.5 5.5V3.5A2.5 2.5 0 0 1 7.5 3.5" stroke="#bbb" fill="none" stroke-width="1"/><rect x="4.5" y="6.5" width="7" height="5" fill="none" stroke="#bbb"/><rect x="7" y="8" width="2" height="2" fill="#bbb"/></svg><div class="a" style="left:1432px;top:146px;width:102px;height:1px;background:#3e3e3e"></div>
<div class="a" style="left:1432px;top:163px;width:102px;height:1px;background:#3e3e3e"></div>
<div class="a" style="left:1432px;top:215px;width:102px;height:1px;background:#3e3e3e"></div>
<div class="a" style="left:1432px;top:232px;width:102px;height:1px;background:#3e3e3e"></div>
<div class="a" style="left:1432px;top:302px;width:102px;height:1px;background:#3e3e3e"></div>
<div class="a" style="left:1432px;top:319px;width:102px;height:1px;background:#3e3e3e"></div>
<div class="a" style="left:1432px;top:251px;width:134px;height:16px;background:#2b2b2b;border-radius:3px"></div>
<div class="t" style="left:1438px;top:253px;color:#e0e0e0">XYZ Euler</div>
<svg class="a" style="left:1556px;top:255px" width="8" height="6"><path d="M1 1.5L4 4.5L7 1.5" stroke="#ccc" stroke-width="1.1" fill="none"/></svg>
<div class="a" style="left:1426px;top:344px;width:146px;height:17px;background:#3e3e3e;border-radius:4px"></div>
<svg class="a" style="left:1431px;top:347px" width="10" height="10"><path d="M2.5 1.5V8.5L8 5Z" fill="#ccc"/></svg>
<div class="t" style="left:1443px;top:347px;color:#e8e8e8">Properties</div>
<svg class="a" style="left:1556px;top:349px" width="14" height="8"><g fill="#111"><rect x="1" y="1" width="1.5" height="1.5"/><rect x="1" y="4" width="1.5" height="1.5"/><rect x="4" y="1" width="1.5" height="1.5"/><rect x="4" y="4" width="1.5" height="1.5"/><rect x="7" y="1" width="1.5" height="1.5"/><rect x="7" y="4" width="1.5" height="1.5"/><rect x="10" y="1" width="1.5" height="1.5"/><rect x="10" y="4" width="1.5" height="1.5"/></g></svg>

<!-- outliner -->
<div class="a" style="left:1592px;top:45px;width:326px;height:311px;background:#282828;border-radius:4px;overflow:hidden"></div>
<div class="a" style="left:1592px;top:45px;width:326px;height:20px;background:#303030;border-radius:4px 4px 0 0"></div>
<div class="a" style="left:1599px;top:48px;width:25px;height:15px;background:#282828;border-radius:3px"></div>
<svg class="a" style="left:1601px;top:49px" width="22" height="13"><rect x="1" y="0.5" width="3" height="2" fill="#ddd"/><path d="M2.5 2.5V10.5H5" stroke="#ddd" fill="none"/><rect x="5" y="5" width="5" height="2.2" fill="#ddd"/><rect x="5" y="8.8" width="5" height="2.2" fill="#ddd"/><path d="M14 5.5L16.5 8L19 5.5" stroke="#ccc" stroke-width="1.1" fill="none"/></svg>
<div class="a" style="left:1629px;top:48px;width:25px;height:15px;background:#282828;border-radius:3px"></div>
<svg class="a" style="left:1631px;top:49px" width="22" height="13"><rect x="3.5" y="0.5" width="8" height="8" fill="none" stroke="#ddd"/><path d="M5 8L7.5 3.5L10 8Z" fill="#ddd"/><path d="M1.5 2.5V10.5H9.5" stroke="#ddd" fill="none"/><path d="M14 5.5L16.5 8L19 5.5" stroke="#ccc" stroke-width="1.1" fill="none"/></svg>
<div class="a" style="left:1704px;top:48px;width:86px;height:15px;background:#1d1d1d;border-radius:3px"></div>
<svg class="a" style="left:1706px;top:49px" width="13" height="13"><circle cx="7.5" cy="5" r="3.5" fill="none" stroke="#ccc" stroke-width="1.1"/><path d="M5 7.5L1.5 11" stroke="#ccc" stroke-width="1.2"/></svg>
<div class="a" style="left:1868px;top:48px;width:25px;height:15px;background:#282828;border-radius:3px"></div>
<svg class="a" style="left:1869px;top:49px" width="22" height="13"><path d="M1 1.5H11L7 6V11L5 10V6Z" fill="none" stroke="#ddd" stroke-width="1"/><path d="M14 5.5L16.5 8L19 5.5" stroke="#ccc" stroke-width="1.1" fill="none"/></svg>
<div class="a" style="left:1898px;top:48px;width:15px;height:15px;background:#4a4a4a;border-radius:3px"></div>
<svg class="a" style="left:1899px;top:49px" width="13" height="13"><rect x="1.5" y="5" width="8" height="7" fill="none" stroke="#ccc"/><rect x="3" y="6.5" width="5" height="2" fill="#ccc"/><circle cx="10" cy="3.5" r="2.8" fill="#ccc"/><path d="M10 2V5M8.5 3.5H11.5" stroke="#4a4a4a"/></svg>
<div class="a" style="left:1592px;top:67px;width:326px;height:17px;background:#282828"></div>
<div class="a" style="left:1592px;top:84px;width:326px;height:17px;background:#2b2b2b"></div>
<div class="a" style="left:1592px;top:101px;width:326px;height:17px;background:#282828"></div>
<div class="a" style="left:1592px;top:118px;width:326px;height:17px;background:#2b2b2b"></div>
<div class="a" style="left:1592px;top:135px;width:326px;height:17px;background:#282828"></div>
<div class="a" style="left:1592px;top:152px;width:326px;height:17px;background:#2b2b2b"></div>
<div class="a" style="left:1592px;top:169px;width:326px;height:17px;background:#282828"></div>
<div class="a" style="left:1592px;top:186px;width:326px;height:17px;background:#2b2b2b"></div>
<div class="a" style="left:1592px;top:203px;width:326px;height:17px;background:#282828"></div>
<div class="a" style="left:1592px;top:220px;width:326px;height:17px;background:#2b2b2b"></div>
<div class="a" style="left:1592px;top:237px;width:326px;height:17px;background:#282828"></div>
<div class="a" style="left:1592px;top:254px;width:326px;height:17px;background:#2b2b2b"></div>
<div class="a" style="left:1592px;top:271px;width:326px;height:17px;background:#282828"></div>
<div class="a" style="left:1592px;top:288px;width:326px;height:17px;background:#2b2b2b"></div>
<div class="a" style="left:1592px;top:305px;width:326px;height:17px;background:#282828"></div>
<div class="a" style="left:1592px;top:322px;width:326px;height:17px;background:#2b2b2b"></div>
<div class="a" style="left:1592px;top:339px;width:326px;height:17px;background:#282828"></div>
<svg class="a" style="left:1611px;top:70px" width="12" height="12"><rect x="0.5" y="0.5" width="11" height="2.5" fill="#ddd"/><path d="M1.5 4H10.5V11H1.5Z" fill="#ddd"/><rect x="4" y="5" width="4" height="1.5" fill="#555"/></svg>
<div class="t" style="left:1629px;top:70px;color:#e0e0e0">Scene Collection</div>
<svg class="a" style="left:1613px;top:89px" width="8" height="8"><path d="M0.5 1.5H7L3.75 6.5Z" fill="#ccc"/></svg>
<div class="a" style="left:1626px;top:84px;width:17px;height:16px;background:#4a4a4a;border-radius:4px"></div>
<svg class="a" style="left:1629px;top:86px" width="12" height="12"><rect x="0.5" y="0.5" width="11" height="2.5" fill="#ddd"/><path d="M1.5 4H10.5V11H1.5Z" fill="#ddd"/><rect x="4" y="5" width="4" height="1.5" fill="#555"/></svg>
<div class="t" style="left:1646px;top:87px;color:#e0e0e0">Collection</div>
<div class="a" style="left:1851px;top:88px;width:9px;height:9px;background:#ddd;border-radius:1px"></div><svg class="a" style="left:1851px;top:88px" width="9" height="9"><path d="M2 4.5L4 6.5L7.5 2.5" stroke="#222" stroke-width="1.3" fill="none"/></svg>
<svg class="a" style="left:1866px;top:88px" width="12" height="10"><path d="M1 5C3 1.5 9 1.5 11 5C9 8.5 3 8.5 1 5Z" fill="none" stroke="#ddd" stroke-width="1.1"/><circle cx="6" cy="5" r="1.6" fill="#ddd"/></svg><svg class="a" style="left:1883px;top:87px" width="12" height="11"><rect x="0.5" y="0.5" width="11" height="8" fill="#ddd"/><rect x="2" y="2" width="8" height="5" fill="#777"/><rect x="2" y="2" width="8" height="4" fill="#eee"/><path d="M4 10H8" stroke="#ddd"/></svg><svg class="a" style="left:1899px;top:87px" width="12" height="11"><path d="M0.5 2H3.5L4.5 0.5H7.5L8.5 2H11.5V10H0.5Z" fill="#ddd"/><circle cx="6" cy="6" r="2.5" fill="#777"/><circle cx="6" cy="6" r="1.2" fill="#ddd"/></svg>
<div class="a" style="left:1616px;top:103px;width:1px;height:252px;background:#555"></div>
<svg class="a" style="left:1630px;top:106px;opacity:0.6" width="7" height="8"><path d="M1 0.5V7.5L6.5 4Z" fill="#999"/></svg>
<svg class="a" style="left:1643px;top:104px;opacity:0.75" width="14" height="12"><path d="M3 2C7 0 11 2 11 6C11 10 6 11 2 10" stroke="#e08a3a" stroke-width="1.6" fill="none"/></svg>
<svg class="a" style="left:1727px;top:104px;opacity:0.6" width="12" height="12"><path d="M4 1.5C8 0.5 10 3 9 6C8 9 4 10 2 9" stroke="#1fcf8a" stroke-width="1.2" fill="none"/></svg>
<div class="t" style="left:1663px;top:104px;color:#7d7d7d">BezierCircle</div>
<svg class="a" style="left:1866px;top:105px" width="12" height="10"><path d="M1.5 4C4 7 8 7 10.5 4" fill="none" stroke="#aaa" stroke-width="1"/></svg><svg class="a" style="left:1883px;top:104px" width="12" height="11"><rect x="0.5" y="0.5" width="11" height="8" fill="#ddd"/><rect x="2" y="2" width="8" height="5" fill="#777"/><rect x="2" y="2" width="8" height="4" fill="#eee"/><path d="M4 10H8" stroke="#ddd"/></svg><svg class="a" style="left:1899px;top:104px" width="12" height="11"><path d="M0.5 2H3.5L4.5 0.5H7.5L8.5 2H11.5V10H0.5Z" fill="#ddd"/><circle cx="6" cy="6" r="2.5" fill="#777"/><circle cx="6" cy="6" r="1.2" fill="#ddd"/></svg>
<svg class="a" style="left:1630px;top:123px;opacity:0.6" width="7" height="8"><path d="M1 0.5V7.5L6.5 4Z" fill="#999"/></svg>
<div class="a" style="left:1643px;top:118px;width:17px;height:16px;background:#4a4a4a;border-radius:4px"></div>
<svg class="a" style="left:1645px;top:120px;opacity:0.7" width="13" height="12"><circle cx="4" cy="3.5" r="2.5" fill="#e08a3a"/><circle cx="9" cy="3.5" r="2.5" fill="#e08a3a"/><rect x="1.5" y="6" width="8" height="5" fill="#e08a3a"/><path d="M9.5 8.5L12.5 6.5V10.5Z" fill="#e08a3a"/></svg>
<svg class="a" style="left:1713px;top:121px;opacity:0.6" width="12" height="12"><path d="M2 9C1 6 5 2 9 2C11 2 11 5 9 8C7 11 3 11 2 9Z" fill="none" stroke="#5b8bd6" stroke-width="1.1"/><circle cx="5" cy="8" r="1.6" fill="none" stroke="#5b8bd6"/></svg>
<div class="a" style="left:1727px;top:118px;width:17px;height:16px;background:#4a4a4a;border-radius:4px"></div>
<svg class="a" style="left:1729px;top:120px;opacity:0.6" width="13" height="12"><path d="M2 6C3 2 10 2 11 6M2 8H11V11H2Z" fill="none" stroke="#1fcf8a" stroke-width="1"/></svg>
<div class="t" style="left:1663px;top:121px;color:#7d7d7d">Camera</div>
<svg class="a" style="left:1866px;top:122px" width="12" height="10"><path d="M1.5 4C4 7 8 7 10.5 4" fill="none" stroke="#aaa" stroke-width="1"/></svg><svg class="a" style="left:1883px;top:121px" width="12" height="11"><rect x="0.5" y="0.5" width="11" height="8" fill="#ddd"/><rect x="2" y="2" width="8" height="5" fill="#777"/><rect x="2" y="2" width="8" height="4" fill="#eee"/><path d="M4 10H8" stroke="#ddd"/></svg><svg class="a" style="left:1899px;top:121px" width="12" height="11"><path d="M0.5 2H3.5L4.5 0.5H7.5L8.5 2H11.5V10H0.5Z" fill="#ddd"/><circle cx="6" cy="6" r="2.5" fill="#777"/><circle cx="6" cy="6" r="1.2" fill="#ddd"/></svg>
<svg class="a" style="left:1630px;top:140px;opacity:1" width="7" height="8"><path d="M1 0.5V7.5L6.5 4Z" fill="#999"/></svg>
<svg class="a" style="left:1644px;top:138px;opacity:1" width="12" height="12"><path d="M1.5 1.5H10.5L6 11Z" fill="none" stroke="#f0933a" stroke-width="2" stroke-linejoin="round"/></svg>
<svg class="a" style="left:1703px;top:138px;opacity:1" width="12" height="12"><circle cx="8.6" cy="3.6" r="2.5" stroke="#5b8bd6" stroke-width="1.6" fill="none" stroke-dasharray="12.2 3.5 0.01 0"/><path d="M6.9 5.4L2 10.3" stroke="#5b8bd6" stroke-width="1.9" stroke-linecap="round"/></svg><svg class="a" style="left:1720px;top:138px;opacity:1" width="12" height="12"><path d="M2 2.5H10L6 10.5Z" fill="none" stroke="#1fcf8a" stroke-width="1.1"/><rect x="0.8" y="1.3" width="2.4" height="2.4" fill="#282828" stroke="#1fcf8a" stroke-width="0.9"/><rect x="8.8" y="1.3" width="2.4" height="2.4" fill="#282828" stroke="#1fcf8a" stroke-width="0.9"/><rect x="4.8" y="9" width="2.4" height="2.4" fill="#282828" stroke="#1fcf8a" stroke-width="0.9"/></svg>
<div class="t" style="left:1663px;top:138px;color:#e0e0e0">Circle</div>
<svg class="a" style="left:1866px;top:139px" width="12" height="10"><path d="M1 5C3 1.5 9 1.5 11 5C9 8.5 3 8.5 1 5Z" fill="none" stroke="#ddd" stroke-width="1.1"/><circle cx="6" cy="5" r="1.6" fill="#ddd"/></svg><svg class="a" style="left:1883px;top:138px" width="12" height="11"><rect x="0.5" y="0.5" width="11" height="8" fill="#ddd"/><rect x="2" y="2" width="8" height="5" fill="#777"/><rect x="2" y="2" width="8" height="4" fill="#eee"/><path d="M4 10H8" stroke="#ddd"/></svg><svg class="a" style="left:1899px;top:138px" width="12" height="11"><path d="M0.5 2H3.5L4.5 0.5H7.5L8.5 2H11.5V10H0.5Z" fill="#ddd"/><circle cx="6" cy="6" r="2.5" fill="#777"/><circle cx="6" cy="6" r="1.2" fill="#ddd"/></svg>
<svg class="a" style="left:1630px;top:157px;opacity:1" width="7" height="8"><path d="M1 0.5V7.5L6.5 4Z" fill="#999"/></svg>
<svg class="a" style="left:1644px;top:155px;opacity:1" width="12" height="12"><path d="M1.5 1.5H10.5L6 11Z" fill="none" stroke="#f0933a" stroke-width="2" stroke-linejoin="round"/></svg>
<svg class="a" style="left:1720px;top:155px;opacity:1" width="12" height="12"><path d="M2 2.5H10L6 10.5Z" fill="none" stroke="#1fcf8a" stroke-width="1.1"/><rect x="0.8" y="1.3" width="2.4" height="2.4" fill="#282828" stroke="#1fcf8a" stroke-width="0.9"/><rect x="8.8" y="1.3" width="2.4" height="2.4" fill="#282828" stroke="#1fcf8a" stroke-width="0.9"/><rect x="4.8" y="9" width="2.4" height="2.4" fill="#282828" stroke="#1fcf8a" stroke-width="0.9"/></svg>
<div class="t" style="left:1663px;top:155px;color:#e0e0e0">Circle.001</div>
<svg class="a" style="left:1866px;top:156px" width="12" height="10"><path d="M1 5C3 1.5 9 1.5 11 5C9 8.5 3 8.5 1 5Z" fill="none" stroke="#ddd" stroke-width="1.1"/><circle cx="6" cy="5" r="1.6" fill="#ddd"/></svg><svg class="a" style="left:1883px;top:155px" width="12" height="11"><rect x="0.5" y="0.5" width="11" height="8" fill="#ddd"/><rect x="2" y="2" width="8" height="5" fill="#777"/><rect x="2" y="2" width="8" height="4" fill="#eee"/><path d="M4 10H8" stroke="#ddd"/></svg><svg class="a" style="left:1899px;top:155px" width="12" height="11"><path d="M0.5 2H3.5L4.5 0.5H7.5L8.5 2H11.5V10H0.5Z" fill="#ddd"/><circle cx="6" cy="6" r="2.5" fill="#777"/><circle cx="6" cy="6" r="1.2" fill="#ddd"/></svg>
<svg class="a" style="left:1630px;top:174px;opacity:1" width="7" height="8"><path d="M1 0.5V7.5L6.5 4Z" fill="#999"/></svg>
<svg class="a" style="left:1644px;top:172px;opacity:1" width="12" height="12"><path d="M1.5 1.5H10.5L6 11Z" fill="none" stroke="#f0933a" stroke-width="2" stroke-linejoin="round"/></svg>
<svg class="a" style="left:1720px;top:172px;opacity:1" width="12" height="12"><circle cx="8.6" cy="3.6" r="2.5" stroke="#5b8bd6" stroke-width="1.6" fill="none" stroke-dasharray="12.2 3.5 0.01 0"/><path d="M6.9 5.4L2 10.3" stroke="#5b8bd6" stroke-width="1.9" stroke-linecap="round"/></svg><svg class="a" style="left:1737px;top:172px;opacity:1" width="12" height="12"><path d="M2 2.5H10L6 10.5Z" fill="none" stroke="#1fcf8a" stroke-width="1.1"/><rect x="0.8" y="1.3" width="2.4" height="2.4" fill="#282828" stroke="#1fcf8a" stroke-width="0.9"/><rect x="8.8" y="1.3" width="2.4" height="2.4" fill="#282828" stroke="#1fcf8a" stroke-width="0.9"/><rect x="4.8" y="9" width="2.4" height="2.4" fill="#282828" stroke="#1fcf8a" stroke-width="0.9"/></svg>
<div class="t" style="left:1663px;top:172px;color:#e0e0e0">Circle.002</div>
<svg class="a" style="left:1866px;top:173px" width="12" height="10"><path d="M1 5C3 1.5 9 1.5 11 5C9 8.5 3 8.5 1 5Z" fill="none" stroke="#ddd" stroke-width="1.1"/><circle cx="6" cy="5" r="1.6" fill="#ddd"/></svg><svg class="a" style="left:1883px;top:172px" width="12" height="11"><rect x="0.5" y="0.5" width="11" height="8" fill="#ddd"/><rect x="2" y="2" width="8" height="5" fill="#777"/><rect x="2" y="2" width="8" height="4" fill="#eee"/><path d="M4 10H8" stroke="#ddd"/></svg><svg class="a" style="left:1899px;top:172px" width="12" height="11"><path d="M0.5 2H3.5L4.5 0.5H7.5L8.5 2H11.5V10H0.5Z" fill="#ddd"/><circle cx="6" cy="6" r="2.5" fill="#777"/><circle cx="6" cy="6" r="1.2" fill="#ddd"/></svg>
<svg class="a" style="left:1630px;top:191px;opacity:1" width="7" height="8"><path d="M1 0.5V7.5L6.5 4Z" fill="#999"/></svg>
<svg class="a" style="left:1644px;top:189px;opacity:1" width="12" height="12"><path d="M1.5 1.5H10.5L6 11Z" fill="none" stroke="#f0933a" stroke-width="2" stroke-linejoin="round"/></svg>
<svg class="a" style="left:1720px;top:189px;opacity:1" width="12" height="12"><circle cx="8.6" cy="3.6" r="2.5" stroke="#5b8bd6" stroke-width="1.6" fill="none" stroke-dasharray="12.2 3.5 0.01 0"/><path d="M6.9 5.4L2 10.3" stroke="#5b8bd6" stroke-width="1.9" stroke-linecap="round"/></svg><svg class="a" style="left:1737px;top:189px;opacity:1" width="12" height="12"><path d="M2 2.5H10L6 10.5Z" fill="none" stroke="#1fcf8a" stroke-width="1.1"/><rect x="0.8" y="1.3" width="2.4" height="2.4" fill="#282828" stroke="#1fcf8a" stroke-width="0.9"/><rect x="8.8" y="1.3" width="2.4" height="2.4" fill="#282828" stroke="#1fcf8a" stroke-width="0.9"/><rect x="4.8" y="9" width="2.4" height="2.4" fill="#282828" stroke="#1fcf8a" stroke-width="0.9"/></svg>
<div class="t" style="left:1663px;top:189px;color:#e0e0e0">Circle.003</div>
<svg class="a" style="left:1866px;top:190px" width="12" height="10"><path d="M1 5C3 1.5 9 1.5 11 5C9 8.5 3 8.5 1 5Z" fill="none" stroke="#ddd" stroke-width="1.1"/><circle cx="6" cy="5" r="1.6" fill="#ddd"/></svg><svg class="a" style="left:1883px;top:189px" width="12" height="11"><rect x="0.5" y="0.5" width="11" height="8" fill="#ddd"/><rect x="2" y="2" width="8" height="5" fill="#777"/><rect x="2" y="2" width="8" height="4" fill="#eee"/><path d="M4 10H8" stroke="#ddd"/></svg><svg class="a" style="left:1899px;top:189px" width="12" height="11"><path d="M0.5 2H3.5L4.5 0.5H7.5L8.5 2H11.5V10H0.5Z" fill="#ddd"/><circle cx="6" cy="6" r="2.5" fill="#777"/><circle cx="6" cy="6" r="1.2" fill="#ddd"/></svg>
<svg class="a" style="left:1630px;top:208px;opacity:1" width="7" height="8"><path d="M1 0.5V7.5L6.5 4Z" fill="#999"/></svg>
<svg class="a" style="left:1644px;top:206px;opacity:1" width="12" height="12"><path d="M1.5 1.5H10.5L6 11Z" fill="none" stroke="#f0933a" stroke-width="2" stroke-linejoin="round"/></svg>
<svg class="a" style="left:1720px;top:206px;opacity:1" width="12" height="12"><circle cx="8.6" cy="3.6" r="2.5" stroke="#5b8bd6" stroke-width="1.6" fill="none" stroke-dasharray="12.2 3.5 0.01 0"/><path d="M6.9 5.4L2 10.3" stroke="#5b8bd6" stroke-width="1.9" stroke-linecap="round"/></svg><svg class="a" style="left:1737px;top:206px;opacity:1" width="12" height="12"><path d="M2 2.5H10L6 10.5Z" fill="none" stroke="#1fcf8a" stroke-width="1.1"/><rect x="0.8" y="1.3" width="2.4" height="2.4" fill="#282828" stroke="#1fcf8a" stroke-width="0.9"/><rect x="8.8" y="1.3" width="2.4" height="2.4" fill="#282828" stroke="#1fcf8a" stroke-width="0.9"/><rect x="4.8" y="9" width="2.4" height="2.4" fill="#282828" stroke="#1fcf8a" stroke-width="0.9"/></svg>
<div class="t" style="left:1663px;top:206px;color:#e0e0e0">Circle.004</div>
<svg class="a" style="left:1866px;top:207px" width="12" height="10"><path d="M1 5C3 1.5 9 1.5 11 5C9 8.5 3 8.5 1 5Z" fill="none" stroke="#ddd" stroke-width="1.1"/><circle cx="6" cy="5" r="1.6" fill="#ddd"/></svg><svg class="a" style="left:1883px;top:206px" width="12" height="11"><rect x="0.5" y="0.5" width="11" height="8" fill="#ddd"/><rect x="2" y="2" width="8" height="5" fill="#777"/><rect x="2" y="2" width="8" height="4" fill="#eee"/><path d="M4 10H8" stroke="#ddd"/></svg><svg class="a" style="left:1899px;top:206px" width="12" height="11"><path d="M0.5 2H3.5L4.5 0.5H7.5L8.5 2H11.5V10H0.5Z" fill="#ddd"/><circle cx="6" cy="6" r="2.5" fill="#777"/><circle cx="6" cy="6" r="1.2" fill="#ddd"/></svg>
<svg class="a" style="left:1630px;top:225px;opacity:1" width="7" height="8"><path d="M1 0.5V7.5L6.5 4Z" fill="#999"/></svg>
<svg class="a" style="left:1644px;top:223px;opacity:1" width="12" height="12"><path d="M1.5 1.5H10.5L6 11Z" fill="none" stroke="#f0933a" stroke-width="2" stroke-linejoin="round"/></svg>
<svg class="a" style="left:1720px;top:223px;opacity:1" width="12" height="12"><circle cx="8.6" cy="3.6" r="2.5" stroke="#5b8bd6" stroke-width="1.6" fill="none" stroke-dasharray="12.2 3.5 0.01 0"/><path d="M6.9 5.4L2 10.3" stroke="#5b8bd6" stroke-width="1.9" stroke-linecap="round"/></svg><svg class="a" style="left:1737px;top:223px;opacity:1" width="12" height="12"><path d="M2 2.5H10L6 10.5Z" fill="none" stroke="#1fcf8a" stroke-width="1.1"/><rect x="0.8" y="1.3" width="2.4" height="2.4" fill="#282828" stroke="#1fcf8a" stroke-width="0.9"/><rect x="8.8" y="1.3" width="2.4" height="2.4" fill="#282828" stroke="#1fcf8a" stroke-width="0.9"/><rect x="4.8" y="9" width="2.4" height="2.4" fill="#282828" stroke="#1fcf8a" stroke-width="0.9"/></svg>
<div class="t" style="left:1663px;top:223px;color:#e0e0e0">Circle.005</div>
<svg class="a" style="left:1866px;top:224px" width="12" height="10"><path d="M1 5C3 1.5 9 1.5 11 5C9 8.5 3 8.5 1 5Z" fill="none" stroke="#ddd" stroke-width="1.1"/><circle cx="6" cy="5" r="1.6" fill="#ddd"/></svg><svg class="a" style="left:1883px;top:223px" width="12" height="11"><rect x="0.5" y="0.5" width="11" height="8" fill="#ddd"/><rect x="2" y="2" width="8" height="5" fill="#777"/><rect x="2" y="2" width="8" height="4" fill="#eee"/><path d="M4 10H8" stroke="#ddd"/></svg><svg class="a" style="left:1899px;top:223px" width="12" height="11"><path d="M0.5 2H3.5L4.5 0.5H7.5L8.5 2H11.5V10H0.5Z" fill="#ddd"/><circle cx="6" cy="6" r="2.5" fill="#777"/><circle cx="6" cy="6" r="1.2" fill="#ddd"/></svg>
<svg class="a" style="left:1630px;top:242px;opacity:1" width="7" height="8"><path d="M1 0.5V7.5L6.5 4Z" fill="#999"/></svg>
<svg class="a" style="left:1644px;top:240px;opacity:1" width="12" height="12"><path d="M1.5 1.5H10.5L6 11Z" fill="none" stroke="#f0933a" stroke-width="2" stroke-linejoin="round"/></svg>
<svg class="a" style="left:1720px;top:240px;opacity:1" width="12" height="12"><circle cx="8.6" cy="3.6" r="2.5" stroke="#5b8bd6" stroke-width="1.6" fill="none" stroke-dasharray="12.2 3.5 0.01 0"/><path d="M6.9 5.4L2 10.3" stroke="#5b8bd6" stroke-width="1.9" stroke-linecap="round"/></svg><svg class="a" style="left:1737px;top:240px;opacity:1" width="12" height="12"><path d="M2 2.5H10L6 10.5Z" fill="none" stroke="#1fcf8a" stroke-width="1.1"/><rect x="0.8" y="1.3" width="2.4" height="2.4" fill="#282828" stroke="#1fcf8a" stroke-width="0.9"/><rect x="8.8" y="1.3" width="2.4" height="2.4" fill="#282828" stroke="#1fcf8a" stroke-width="0.9"/><rect x="4.8" y="9" width="2.4" height="2.4" fill="#282828" stroke="#1fcf8a" stroke-width="0.9"/></svg>
<div class="t" style="left:1663px;top:240px;color:#e0e0e0">Circle.006</div>
<svg class="a" style="left:1866px;top:241px" width="12" height="10"><path d="M1 5C3 1.5 9 1.5 11 5C9 8.5 3 8.5 1 5Z" fill="none" stroke="#ddd" stroke-width="1.1"/><circle cx="6" cy="5" r="1.6" fill="#ddd"/></svg><svg class="a" style="left:1883px;top:240px" width="12" height="11"><rect x="0.5" y="0.5" width="11" height="8" fill="#ddd"/><rect x="2" y="2" width="8" height="5" fill="#777"/><rect x="2" y="2" width="8" height="4" fill="#eee"/><path d="M4 10H8" stroke="#ddd"/></svg><svg class="a" style="left:1899px;top:240px" width="12" height="11"><path d="M0.5 2H3.5L4.5 0.5H7.5L8.5 2H11.5V10H0.5Z" fill="#ddd"/><circle cx="6" cy="6" r="2.5" fill="#777"/><circle cx="6" cy="6" r="1.2" fill="#ddd"/></svg>
<svg class="a" style="left:1630px;top:259px;opacity:1" width="7" height="8"><path d="M1 0.5V7.5L6.5 4Z" fill="#999"/></svg>
<svg class="a" style="left:1644px;top:257px;opacity:1" width="12" height="12"><path d="M1.5 1.5H10.5L6 11Z" fill="none" stroke="#f0933a" stroke-width="2" stroke-linejoin="round"/></svg>
<svg class="a" style="left:1720px;top:257px;opacity:1" width="12" height="12"><circle cx="8.6" cy="3.6" r="2.5" stroke="#5b8bd6" stroke-width="1.6" fill="none" stroke-dasharray="12.2 3.5 0.01 0"/><path d="M6.9 5.4L2 10.3" stroke="#5b8bd6" stroke-width="1.9" stroke-linecap="round"/></svg><svg class="a" style="left:1737px;top:257px;opacity:1" width="12" height="12"><path d="M2 2.5H10L6 10.5Z" fill="none" stroke="#1fcf8a" stroke-width="1.1"/><rect x="0.8" y="1.3" width="2.4" height="2.4" fill="#282828" stroke="#1fcf8a" stroke-width="0.9"/><rect x="8.8" y="1.3" width="2.4" height="2.4" fill="#282828" stroke="#1fcf8a" stroke-width="0.9"/><rect x="4.8" y="9" width="2.4" height="2.4" fill="#282828" stroke="#1fcf8a" stroke-width="0.9"/></svg>
<div class="t" style="left:1663px;top:257px;color:#e0e0e0">Circle.007</div>
<svg class="a" style="left:1866px;top:258px" width="12" height="10"><path d="M1 5C3 1.5 9 1.5 11 5C9 8.5 3 8.5 1 5Z" fill="none" stroke="#ddd" stroke-width="1.1"/><circle cx="6" cy="5" r="1.6" fill="#ddd"/></svg><svg class="a" style="left:1883px;top:257px" width="12" height="11"><rect x="0.5" y="0.5" width="11" height="8" fill="#ddd"/><rect x="2" y="2" width="8" height="5" fill="#777"/><rect x="2" y="2" width="8" height="4" fill="#eee"/><path d="M4 10H8" stroke="#ddd"/></svg><svg class="a" style="left:1899px;top:257px" width="12" height="11"><path d="M0.5 2H3.5L4.5 0.5H7.5L8.5 2H11.5V10H0.5Z" fill="#ddd"/><circle cx="6" cy="6" r="2.5" fill="#777"/><circle cx="6" cy="6" r="1.2" fill="#ddd"/></svg>
<svg class="a" style="left:1630px;top:276px;opacity:1" width="7" height="8"><path d="M1 0.5V7.5L6.5 4Z" fill="#999"/></svg>
<svg class="a" style="left:1644px;top:274px;opacity:1" width="12" height="12"><path d="M1.5 1.5H10.5L6 11Z" fill="none" stroke="#f0933a" stroke-width="2" stroke-linejoin="round"/></svg>
<svg class="a" style="left:1720px;top:274px;opacity:1" width="12" height="12"><circle cx="8.6" cy="3.6" r="2.5" stroke="#5b8bd6" stroke-width="1.6" fill="none" stroke-dasharray="12.2 3.5 0.01 0"/><path d="M6.9 5.4L2 10.3" stroke="#5b8bd6" stroke-width="1.9" stroke-linecap="round"/></svg><svg class="a" style="left:1737px;top:274px;opacity:1" width="12" height="12"><path d="M2 2.5H10L6 10.5Z" fill="none" stroke="#1fcf8a" stroke-width="1.1"/><rect x="0.8" y="1.3" width="2.4" height="2.4" fill="#282828" stroke="#1fcf8a" stroke-width="0.9"/><rect x="8.8" y="1.3" width="2.4" height="2.4" fill="#282828" stroke="#1fcf8a" stroke-width="0.9"/><rect x="4.8" y="9" width="2.4" height="2.4" fill="#282828" stroke="#1fcf8a" stroke-width="0.9"/></svg>
<div class="t" style="left:1663px;top:274px;color:#e0e0e0">Circle.010</div>
<svg class="a" style="left:1866px;top:275px" width="12" height="10"><path d="M1 5C3 1.5 9 1.5 11 5C9 8.5 3 8.5 1 5Z" fill="none" stroke="#ddd" stroke-width="1.1"/><circle cx="6" cy="5" r="1.6" fill="#ddd"/></svg><svg class="a" style="left:1883px;top:274px" width="12" height="11"><rect x="0.5" y="0.5" width="11" height="8" fill="#ddd"/><rect x="2" y="2" width="8" height="5" fill="#777"/><rect x="2" y="2" width="8" height="4" fill="#eee"/><path d="M4 10H8" stroke="#ddd"/></svg><svg class="a" style="left:1899px;top:274px" width="12" height="11"><path d="M0.5 2H3.5L4.5 0.5H7.5L8.5 2H11.5V10H0.5Z" fill="#ddd"/><circle cx="6" cy="6" r="2.5" fill="#777"/><circle cx="6" cy="6" r="1.2" fill="#ddd"/></svg>
<svg class="a" style="left:1630px;top:293px;opacity:0.6" width="7" height="8"><path d="M1 0.5V7.5L6.5 4Z" fill="#999"/></svg>
<svg class="a" style="left:1644px;top:291px;opacity:0.55" width="12" height="12"><path d="M1.5 1.5H10.5L6 11Z" fill="none" stroke="#f0933a" stroke-width="2" stroke-linejoin="round"/></svg>
<svg class="a" style="left:1720px;top:291px;opacity:0.5" width="12" height="12"><circle cx="8.6" cy="3.6" r="2.5" stroke="#5b8bd6" stroke-width="1.6" fill="none" stroke-dasharray="12.2 3.5 0.01 0"/><path d="M6.9 5.4L2 10.3" stroke="#5b8bd6" stroke-width="1.9" stroke-linecap="round"/></svg><svg class="a" style="left:1737px;top:291px;opacity:0.5" width="12" height="12"><path d="M2 2.5H10L6 10.5Z" fill="none" stroke="#1fcf8a" stroke-width="1.1"/><rect x="0.8" y="1.3" width="2.4" height="2.4" fill="#282828" stroke="#1fcf8a" stroke-width="0.9"/><rect x="8.8" y="1.3" width="2.4" height="2.4" fill="#282828" stroke="#1fcf8a" stroke-width="0.9"/><rect x="4.8" y="9" width="2.4" height="2.4" fill="#282828" stroke="#1fcf8a" stroke-width="0.9"/></svg>
<div class="t" style="left:1663px;top:291px;color:#7d7d7d">Circle.011</div>
<svg class="a" style="left:1866px;top:292px" width="12" height="10"><path d="M1 5C3 1.5 9 1.5 11 5C9 8.5 3 8.5 1 5Z" fill="none" stroke="#ddd" stroke-width="1.1"/><circle cx="6" cy="5" r="1.6" fill="#ddd"/></svg><svg class="a" style="left:1883px;top:291px" width="12" height="11"><rect x="1" y="1" width="10" height="7" fill="none" stroke="#ccc" stroke-width="0.9"/><path d="M4 10H8" stroke="#ccc"/></svg><svg class="a" style="left:1899px;top:291px" width="12" height="11"><path d="M1 2.5H4L5 1H8L9 2.5H11V10H1Z" fill="none" stroke="#ccc" stroke-width="0.9"/><path d="M4.5 4.5L7.5 7.5M7.5 4.5L4.5 7.5" stroke="#ccc" stroke-width="0.9"/></svg>
<svg class="a" style="left:1630px;top:310px;opacity:0.6" width="7" height="8"><path d="M1 0.5V7.5L6.5 4Z" fill="#999"/></svg>
<svg class="a" style="left:1644px;top:308px;opacity:0.55" width="12" height="12"><path d="M1.5 1.5H10.5L6 11Z" fill="none" stroke="#f0933a" stroke-width="2" stroke-linejoin="round"/></svg>
<svg class="a" style="left:1720px;top:308px;opacity:0.5" width="12" height="12"><circle cx="8.6" cy="3.6" r="2.5" stroke="#5b8bd6" stroke-width="1.6" fill="none" stroke-dasharray="12.2 3.5 0.01 0"/><path d="M6.9 5.4L2 10.3" stroke="#5b8bd6" stroke-width="1.9" stroke-linecap="round"/></svg><svg class="a" style="left:1737px;top:308px;opacity:0.5" width="12" height="12"><path d="M2 2.5H10L6 10.5Z" fill="none" stroke="#1fcf8a" stroke-width="1.1"/><rect x="0.8" y="1.3" width="2.4" height="2.4" fill="#282828" stroke="#1fcf8a" stroke-width="0.9"/><rect x="8.8" y="1.3" width="2.4" height="2.4" fill="#282828" stroke="#1fcf8a" stroke-width="0.9"/><rect x="4.8" y="9" width="2.4" height="2.4" fill="#282828" stroke="#1fcf8a" stroke-width="0.9"/></svg>
<div class="t" style="left:1663px;top:308px;color:#7d7d7d">Circle.012</div>
<svg class="a" style="left:1866px;top:309px" width="12" height="10"><path d="M1 5C3 1.5 9 1.5 11 5C9 8.5 3 8.5 1 5Z" fill="none" stroke="#ddd" stroke-width="1.1"/><circle cx="6" cy="5" r="1.6" fill="#ddd"/></svg><svg class="a" style="left:1883px;top:308px" width="12" height="11"><rect x="1" y="1" width="10" height="7" fill="none" stroke="#ccc" stroke-width="0.9"/><path d="M4 10H8" stroke="#ccc"/></svg><svg class="a" style="left:1899px;top:308px" width="12" height="11"><path d="M1 2.5H4L5 1H8L9 2.5H11V10H1Z" fill="none" stroke="#ccc" stroke-width="0.9"/><path d="M4.5 4.5L7.5 7.5M7.5 4.5L4.5 7.5" stroke="#ccc" stroke-width="0.9"/></svg>
<svg class="a" style="left:1630px;top:327px;opacity:0.6" width="7" height="8"><path d="M1 0.5V7.5L6.5 4Z" fill="#999"/></svg>
<svg class="a" style="left:1644px;top:325px;opacity:0.55" width="12" height="12"><path d="M1.5 1.5H10.5L6 11Z" fill="none" stroke="#f0933a" stroke-width="2" stroke-linejoin="round"/></svg>
<svg class="a" style="left:1720px;top:325px;opacity:0.5" width="12" height="12"><circle cx="8.6" cy="3.6" r="2.5" stroke="#5b8bd6" stroke-width="1.6" fill="none" stroke-dasharray="12.2 3.5 0.01 0"/><path d="M6.9 5.4L2 10.3" stroke="#5b8bd6" stroke-width="1.9" stroke-linecap="round"/></svg><svg class="a" style="left:1737px;top:325px;opacity:0.5" width="12" height="12"><path d="M2 2.5H10L6 10.5Z" fill="none" stroke="#1fcf8a" stroke-width="1.1"/><rect x="0.8" y="1.3" width="2.4" height="2.4" fill="#282828" stroke="#1fcf8a" stroke-width="0.9"/><rect x="8.8" y="1.3" width="2.4" height="2.4" fill="#282828" stroke="#1fcf8a" stroke-width="0.9"/><rect x="4.8" y="9" width="2.4" height="2.4" fill="#282828" stroke="#1fcf8a" stroke-width="0.9"/></svg>
<div class="t" style="left:1663px;top:325px;color:#7d7d7d">Circle.013</div>
<svg class="a" style="left:1866px;top:326px" width="12" height="10"><path d="M1 5C3 1.5 9 1.5 11 5C9 8.5 3 8.5 1 5Z" fill="none" stroke="#ddd" stroke-width="1.1"/><circle cx="6" cy="5" r="1.6" fill="#ddd"/></svg><svg class="a" style="left:1883px;top:325px" width="12" height="11"><rect x="1" y="1" width="10" height="7" fill="none" stroke="#ccc" stroke-width="0.9"/><path d="M4 10H8" stroke="#ccc"/></svg><svg class="a" style="left:1899px;top:325px" width="12" height="11"><path d="M1 2.5H4L5 1H8L9 2.5H11V10H1Z" fill="none" stroke="#ccc" stroke-width="0.9"/><path d="M4.5 4.5L7.5 7.5M7.5 4.5L4.5 7.5" stroke="#ccc" stroke-width="0.9"/></svg>
<svg class="a" style="left:1630px;top:344px;opacity:1" width="7" height="8"><path d="M1 0.5V7.5L6.5 4Z" fill="#999"/></svg>
<svg class="a" style="left:1644px;top:342px;opacity:1" width="12" height="12"><path d="M1.5 1.5H10.5L6 11Z" fill="none" stroke="#f0933a" stroke-width="2" stroke-linejoin="round"/></svg>
<svg class="a" style="left:1720px;top:342px;opacity:1" width="12" height="12"><circle cx="8.6" cy="3.6" r="2.5" stroke="#5b8bd6" stroke-width="1.6" fill="none" stroke-dasharray="12.2 3.5 0.01 0"/><path d="M6.9 5.4L2 10.3" stroke="#5b8bd6" stroke-width="1.9" stroke-linecap="round"/></svg><svg class="a" style="left:1737px;top:342px;opacity:1" width="12" height="12"><path d="M2 2.5H10L6 10.5Z" fill="none" stroke="#1fcf8a" stroke-width="1.1"/><rect x="0.8" y="1.3" width="2.4" height="2.4" fill="#282828" stroke="#1fcf8a" stroke-width="0.9"/><rect x="8.8" y="1.3" width="2.4" height="2.4" fill="#282828" stroke="#1fcf8a" stroke-width="0.9"/><rect x="4.8" y="9" width="2.4" height="2.4" fill="#282828" stroke="#1fcf8a" stroke-width="0.9"/></svg>
<div class="t" style="left:1663px;top:342px;color:#e0e0e0">Cube.001</div>
<svg class="a" style="left:1866px;top:343px" width="12" height="10"><path d="M1 5C3 1.5 9 1.5 11 5C9 8.5 3 8.5 1 5Z" fill="none" stroke="#ddd" stroke-width="1.1"/><circle cx="6" cy="5" r="1.6" fill="#ddd"/></svg><svg class="a" style="left:1883px;top:342px" width="12" height="11"><rect x="0.5" y="0.5" width="11" height="8" fill="#ddd"/><rect x="2" y="2" width="8" height="5" fill="#777"/><rect x="2" y="2" width="8" height="4" fill="#eee"/><path d="M4 10H8" stroke="#ddd"/></svg><svg class="a" style="left:1899px;top:342px" width="12" height="11"><path d="M0.5 2H3.5L4.5 0.5H7.5L8.5 2H11.5V10H0.5Z" fill="#ddd"/><circle cx="6" cy="6" r="2.5" fill="#777"/><circle cx="6" cy="6" r="1.2" fill="#ddd"/></svg>

<!-- properties -->
<div class="a" style="left:1592px;top:358px;width:326px;height:659px;background:#3d3d3d;border-radius:4px 4px 0 0;overflow:hidden"></div>
<div class="a" style="left:1592px;top:358px;width:326px;height:21px;background:#333333;border-radius:4px 4px 0 0"></div>
<div class="a" style="left:1600px;top:361px;width:24px;height:16px;background:#2a2a2a;border-radius:3px"></div>
<svg class="a" style="left:1601px;top:362px" width="22" height="14"><rect x="1.5" y="0.5" width="10" height="5" rx="2.5" fill="#ddd"/><rect x="6" y="2" width="4" height="2" fill="#333"/><rect x="1.5" y="6.5" width="10" height="5" rx="2.5" fill="#ddd"/><rect x="3" y="8" width="4" height="2" fill="#333"/><path d="M15 5.5L17.5 8L20 5.5" stroke="#ccc" stroke-width="1.1" fill="none"/></svg>
<div class="a" style="left:1714px;top:361px;width:86px;height:15px;background:#1d1d1d;border-radius:3px"></div>
<svg class="a" style="left:1716px;top:362px" width="13" height="13"><circle cx="7.5" cy="5" r="3.5" fill="none" stroke="#ccc" stroke-width="1.1"/><path d="M5 7.5L1.5 11" stroke="#ccc" stroke-width="1.2"/></svg>
<div class="a" style="left:1898px;top:361px;width:15px;height:15px;background:#2a2a2a;border-radius:3px"></div>
<svg class="a" style="left:1901px;top:365px" width="9" height="7"><path d="M1 1.5L4.5 5L8 1.5" stroke="#ccc" stroke-width="1.1" fill="none"/></svg>
<div class="a" style="left:1592px;top:379px;width:20px;height:638px;background:#262626"></div>
<div class="a" style="left:1592px;top:385px;width:20px;height:23px;background:#2c2c2c;border-radius:0 4px 4px 0"></div>
<div class="a" style="left:1592px;top:414px;width:20px;height:115px;background:#2c2c2c;border-radius:0 4px 4px 0"></div>
<div class="a" style="left:1592px;top:538px;width:20px;height:21px;background:#2c2c2c;border-radius:0 4px 4px 0"></div>
<div class="a" style="left:1592px;top:566px;width:20px;height:121px;background:#2c2c2c;border-radius:0 4px 4px 0"></div>
<div class="a" style="left:1592px;top:439px;width:20px;height:20px;background:#3d3d3d"></div>
<svg class="a" style="left:1595px;top:390px" width="14" height="14"><path d="M4 1V7M3 8H5V11H3Z" stroke="#ddd" stroke-width="1.3" fill="#ddd"/><path d="M9 2A2 2 0 0 0 9 6V11M9 2A2 2 0 0 1 9 6" stroke="#ddd" stroke-width="1.4" fill="none"/></svg>
<svg class="a" style="left:1595px;top:419px" width="14" height="14"><rect x="1.5" y="3.5" width="10" height="8" fill="none" stroke="#ddd" stroke-width="1.1"/><path d="M4 3.5L5 1.5H8L9 3.5" stroke="#ddd" fill="none"/><rect x="3" y="5" width="6" height="5" fill="#ddd" opacity="0.4"/></svg>
<svg class="a" style="left:1595px;top:443px" width="14" height="14"><rect x="1" y="1" width="11" height="4" rx="1" fill="#ddd"/><path d="M2.5 5V11.5H10.5V5" stroke="#ddd" fill="none" stroke-width="1.1"/><path d="M4 10L6.5 7L9 10Z" fill="#ddd"/></svg>
<svg class="a" style="left:1595px;top:465px" width="14" height="14"><rect x="3.5" y="1.5" width="8" height="8" fill="none" stroke="#ddd"/><path d="M5 9L7.5 4.5L10 9Z" fill="#ddd"/><path d="M1.5 3.5V11.5H9.5" stroke="#ddd" fill="none"/></svg>
<svg class="a" style="left:1595px;top:489px" width="14" height="14"><path d="M4 1L1 8H7Z" fill="#ddd"/><circle cx="9.5" cy="2.5" r="1.5" fill="#ddd"/><circle cx="8" cy="9" r="2.8" fill="none" stroke="#ddd" stroke-width="1.1"/></svg>
<svg class="a" style="left:1595px;top:512px" width="14" height="14"><circle cx="6.5" cy="6.5" r="5" fill="none" stroke="#e05a5a" stroke-width="1.3"/><path d="M3 4C5 5 6 3 8 4C9 6 6 8 8 10M2 8C4 8 5 10 4 11" stroke="#e05a5a" stroke-width="1.1" fill="none"/></svg>
<svg class="a" style="left:1595px;top:542px" width="14" height="14"><rect x="0.5" y="0.5" width="12" height="3" fill="#ddd"/><path d="M1.5 4.5V12H11.5V4.5" stroke="#ddd" fill="none" stroke-width="1.1"/><path d="M5 6.5H8" stroke="#ddd" stroke-width="1.3"/></svg>
<svg class="a" style="left:1595px;top:572px" width="14" height="14"><rect x="2.5" y="2.5" width="8" height="8" fill="#f0933a"/><path d="M0.5 3V0.5H3M10 0.5H12.5V3M12.5 10V12.5H10M3 12.5H0.5V10" stroke="#f0933a" fill="none"/></svg>
<svg class="a" style="left:1595px;top:595px" width="14" height="14"><circle cx="6" cy="7" r="4.5" fill="none" stroke="#5b8bd6" stroke-width="1.2"/><circle cx="6" cy="7" r="2" fill="#5b8bd6"/><circle cx="10.5" cy="2.5" r="1.5" fill="#5b8bd6"/></svg>
<svg class="a" style="left:1595px;top:618px" width="14" height="14"><path d="M2 8C2 5 5 5 6 5C9 5 11 3 11 2" stroke="#5b8bd6" stroke-width="1.3" fill="none"/><circle cx="4.5" cy="8.5" r="3" fill="none" stroke="#5b8bd6" stroke-width="1.3"/><circle cx="8.5" cy="5.5" r="3" fill="none" stroke="#5b8bd6" stroke-width="1.3"/></svg>
<svg class="a" style="left:1595px;top:641px" width="14" height="14"><path d="M2 6C3 2 10 2 11 6M1.5 7.5H11.5V12H1.5Z" fill="none" stroke="#1fcf8a" stroke-width="1.1"/><circle cx="6.5" cy="4" r="1.5" fill="#1fcf8a"/></svg>
<svg class="a" style="left:1595px;top:671px" width="14" height="14"><g fill="#e05a5a"><rect x="1" y="1" width="3" height="3"/><rect x="7" y="1" width="3" height="3"/><rect x="4" y="4" width="3" height="3"/><rect x="10" y="4" width="2" height="3"/><rect x="1" y="7" width="3" height="3"/><rect x="7" y="7" width="3" height="3"/><rect x="4" y="10" width="3" height="2"/><rect x="10" y="10" width="2" height="2"/></g><rect x="0.5" y="0.5" width="12" height="12" fill="#e05a5a" opacity="0.35"/></svg>
<svg class="a" style="left:1619px;top:386px" width="13" height="13"><path d="M4 1L1 8H7Z" fill="#ddd"/><circle cx="9.5" cy="2.5" r="1.5" fill="#ddd"/><circle cx="8" cy="9" r="2.8" fill="none" stroke="#ddd" stroke-width="1.1"/></svg>
<div class="t" style="left:1638px;top:387px;color:#e0e0e0">Scene</div>
<svg class="a" style="left:1898px;top:386px" width="13" height="13"><path d="M8 1L12 5M9 2L5 6L3 5.5L7.5 10L7 8L11 4M5.5 7.5L1.5 11.5" stroke="#aaa" fill="none" stroke-width="1"/></svg>
<div class="a" style="left:1612px;top:428px;width:306px;height:231px;background:#383838"></div><div class="a" style="left:1612px;top:699px;width:306px;height:125px;background:#383838"></div><div class="a" style="left:1612px;top:410px;width:306px;height:18px;background:#424242"></div>
<svg class="a" style="left:1617px;top:414px" width="9" height="9"><path d="M1 2H8L4.5 7Z" fill="#bbb"/></svg><div class="t" style="left:1630px;top:413px;color:#e0e0e0">Dimensions</div><svg class="a" style="left:1883px;top:413px" width="13" height="12"><g fill="#ddd"><circle cx="2" cy="2" r="1.5"/><circle cx="2" cy="6" r="1.5"/><circle cx="2" cy="10" r="1.5"/></g><path d="M5 2H12M5 6H12M5 10H12" stroke="#ccc" stroke-width="1"/></svg><svg class="a" style="left:1902px;top:415px" width="14" height="8"><g fill="#1a1a1a"><rect x="1" y="1" width="1.5" height="1.5"/><rect x="1" y="4" width="1.5" height="1.5"/><rect x="4" y="1" width="1.5" height="1.5"/><rect x="4" y="4" width="1.5" height="1.5"/><rect x="7" y="1" width="1.5" height="1.5"/><rect x="7" y="4" width="1.5" height="1.5"/><rect x="10" y="1" width="1.5" height="1.5"/><rect x="10" y="4" width="1.5" height="1.5"/></g></svg>
<div class="t" style="left:1582px;top:436px;width:150px;text-align:right;color:#d0d0d0">Resolution X</div><div class="a" style="left:1741px;top:434px;width:172px;height:16px;background:#545454;border-radius:3px 3px 0 0"></div><div class="t" style="left:1741px;top:436px;width:172px;text-align:center;color:#e6e6e6">1080 px</div><div class="t" style="left:1582px;top:453px;width:150px;text-align:right;color:#d0d0d0">Y</div><div class="a" style="left:1741px;top:451px;width:172px;height:16px;background:#545454;border-radius:0"></div><div class="t" style="left:1741px;top:453px;width:172px;text-align:center;color:#e6e6e6">1080 px</div><div class="t" style="left:1582px;top:470px;width:150px;text-align:right;color:#d0d0d0">%</div><div class="a" style="left:1741px;top:468px;width:172px;height:16px;background:#4772b3;border-radius:0 0 3px 3px"></div><div class="t" style="left:1741px;top:470px;width:172px;text-align:center;color:#e6e6e6">100%</div><div class="t" style="left:1582px;top:490px;width:150px;text-align:right;color:#d0d0d0">Aspect X</div><div class="a" style="left:1741px;top:488px;width:172px;height:16px;background:#545454;border-radius:3px 3px 0 0"></div><div class="t" style="left:1741px;top:490px;width:172px;text-align:center;color:#e6e6e6">1.000</div><div class="t" style="left:1582px;top:507px;width:150px;text-align:right;color:#d0d0d0">Y</div><div class="a" style="left:1741px;top:505px;width:172px;height:16px;background:#545454;border-radius:0 0 3px 3px"></div><div class="t" style="left:1741px;top:507px;width:172px;text-align:center;color:#e6e6e6">1.000</div><div class="a" style="left:1741px;top:528px;width:11px;height:11px;background:#545454;border-radius:2px"></div><div class="t" style="left:1755px;top:527px;color:#d8d8d8">Render Region</div><div class="a" style="left:1741px;top:545px;width:11px;height:11px;background:#474747;border-radius:2px"></div><div class="t" style="left:1755px;top:544px;color:#7d7d7d">Crop to Render Region</div><div class="t" style="left:1582px;top:564px;width:150px;text-align:right;color:#d0d0d0">Frame Start</div><div class="a" style="left:1741px;top:562px;width:172px;height:16px;background:#545454;border-radius:3px 3px 0 0"></div><div class="t" style="left:1741px;top:564px;width:172px;text-align:center;color:#e6e6e6">1</div><div class="t" style="left:1582px;top:581px;width:150px;text-align:right;color:#d0d0d0">End</div><div class="a" style="left:1741px;top:579px;width:172px;height:16px;background:#545454;border-radius:0"></div><div class="t" style="left:1741px;top:581px;width:172px;text-align:center;color:#e6e6e6">100</div><div class="t" style="left:1582px;top:598px;width:150px;text-align:right;color:#d0d0d0">Step</div><div class="a" style="left:1741px;top:596px;width:172px;height:16px;background:#545454;border-radius:0 0 3px 3px"></div><div class="t" style="left:1741px;top:598px;width:172px;text-align:center;color:#e6e6e6">1</div><div class="t" style="left:1582px;top:618px;width:150px;text-align:right;color:#d0d0d0">Frame Rate</div><div class="a" style="left:1741px;top:616px;width:172px;height:16px;background:#2b2b2b;border-radius:3px"></div><div class="t" style="left:1747px;top:618px;color:#e0e0e0">24 fps</div><svg class="a" style="left:1902px;top:621px" width="8" height="6"><path d="M1 1.5L4 4.5L7 1.5" stroke="#ccc" stroke-width="1.1" fill="none"/></svg>
<div class="a" style="left:1741px;top:450px;width:172px;height:1px;background:#3d3d3d"></div><div class="a" style="left:1741px;top:467px;width:172px;height:1px;background:#3d3d3d"></div><div class="a" style="left:1741px;top:504px;width:172px;height:1px;background:#3d3d3d"></div><div class="a" style="left:1741px;top:578px;width:172px;height:1px;background:#3d3d3d"></div><div class="a" style="left:1741px;top:595px;width:172px;height:1px;background:#3d3d3d"></div><svg class="a" style="left:1628px;top:645px" width="9" height="9"><path d="M2 1V8L7 4.5Z" fill="#bbb"/></svg><div class="t" style="left:1641px;top:644px;color:#d8d8d8">Time Remapping</div>
<div class="a" style="left:1612px;top:660px;width:306px;height:19px;background:#424242"></div><svg class="a" style="left:1617px;top:665px" width="9" height="9"><path d="M2 1V8L7 4.5Z" fill="#bbb"/></svg><div class="a" style="left:1630px;top:664px;width:11px;height:11px;background:#545454;border-radius:2px"></div><div class="t" style="left:1643px;top:664px;color:#e0e0e0">Stereoscopy</div><svg class="a" style="left:1902px;top:667px" width="14" height="8"><g fill="#1a1a1a"><rect x="1" y="1" width="1.5" height="1.5"/><rect x="1" y="4" width="1.5" height="1.5"/><rect x="4" y="1" width="1.5" height="1.5"/><rect x="4" y="4" width="1.5" height="1.5"/><rect x="7" y="1" width="1.5" height="1.5"/><rect x="7" y="4" width="1.5" height="1.5"/><rect x="10" y="1" width="1.5" height="1.5"/><rect x="10" y="4" width="1.5" height="1.5"/></g></svg>
<div class="a" style="left:1612px;top:680px;width:306px;height:19px;background:#424242"></div><svg class="a" style="left:1617px;top:685px" width="9" height="9"><path d="M1 2H8L4.5 7Z" fill="#bbb"/></svg><div class="t" style="left:1630px;top:684px;color:#e0e0e0">Output</div><svg class="a" style="left:1902px;top:687px" width="14" height="8"><g fill="#1a1a1a"><rect x="1" y="1" width="1.5" height="1.5"/><rect x="1" y="4" width="1.5" height="1.5"/><rect x="4" y="1" width="1.5" height="1.5"/><rect x="4" y="4" width="1.5" height="1.5"/><rect x="7" y="1" width="1.5" height="1.5"/><rect x="7" y="4" width="1.5" height="1.5"/><rect x="10" y="1" width="1.5" height="1.5"/><rect x="10" y="4" width="1.5" height="1.5"/></g></svg>
<div class="a" style="left:1619px;top:705px;width:277px;height:16px;background:#1d1d1d;border-radius:3px 0 0 3px"></div><div class="t" style="left:1625px;top:707px;color:#e0e0e0">C:\Users\Ryan\Desktop\</div><div class="a" style="left:1896px;top:705px;width:17px;height:16px;background:#545454;border-radius:0 3px 3px 0"></div><svg class="a" style="left:1898px;top:707px" width="13" height="12"><path d="M1 2H5L6 3.5H12V11H1Z" fill="#ddd"/><path d="M1 5H12" stroke="#555"/></svg>
<div class="t" style="left:1582px;top:727px;width:150px;text-align:right;color:#d0d0d0">Saving</div><div class="a" style="left:1741px;top:728px;width:11px;height:11px;background:#4772b3;border-radius:2px"></div><svg class="a" style="left:1741px;top:728px" width="11" height="11"><path d="M2 5.5L4.5 8L9 2.5" stroke="#fff" stroke-width="1.5" fill="none"/></svg><div class="t" style="left:1755px;top:727px;color:#e0e0e0">File Extensions</div><div class="a" style="left:1741px;top:746px;width:11px;height:11px;background:#545454;border-radius:2px"></div><div class="t" style="left:1755px;top:745px;color:#d8d8d8">Cache Result</div>
<div class="t" style="left:1582px;top:765px;width:150px;text-align:right;color:#d0d0d0">File Format</div><div class="a" style="left:1741px;top:764px;width:172px;height:15px;background:#2b2b2b;border-radius:3px"></div><svg class="a" style="left:1743px;top:765px" width="12" height="13"><rect x="1" y="1" width="10" height="11" fill="#ddd"/><g fill="#2b2b2b"><rect x="2" y="2" width="1.5" height="1.5"/><rect x="2" y="5" width="1.5" height="1.5"/><rect x="2" y="8" width="1.5" height="1.5"/><rect x="8.5" y="2" width="1.5" height="1.5"/><rect x="8.5" y="5" width="1.5" height="1.5"/><rect x="8.5" y="8" width="1.5" height="1.5"/></g><path d="M4.5 4V9L8 6.5Z" fill="#2b2b2b"/></svg><div class="t" style="left:1760px;top:766px;color:#e0e0e0">FFmpeg Video</div><svg class="a" style="left:1902px;top:769px" width="8" height="6"><path d="M1 1.5L4 4.5L7 1.5" stroke="#ccc" stroke-width="1.1" fill="none"/></svg>
<div class="t" style="left:1582px;top:783px;width:150px;text-align:right;color:#d0d0d0">Color</div><div class="a" style="left:1741px;top:782px;width:86px;height:15px;background:#545454;border-radius:3px 0 0 3px"></div><div class="t" style="left:1741px;top:784px;width:86px;text-align:center;color:#e0e0e0">BW</div><div class="a" style="left:1827px;top:782px;width:86px;height:15px;background:#4772b3;border-radius:0 3px 3px 0"></div><div class="t" style="left:1827px;top:784px;width:86px;text-align:center;color:#fff">RGB</div>
<svg class="a" style="left:1628px;top:810px" width="9" height="9"><path d="M2 1V8L7 4.5Z" fill="#bbb"/></svg><div class="t" style="left:1641px;top:809px;color:#d8d8d8">Encoding</div><svg class="a" style="left:1883px;top:809px" width="13" height="12"><g fill="#ddd"><circle cx="2" cy="2" r="1.5"/><circle cx="2" cy="6" r="1.5"/><circle cx="2" cy="10" r="1.5"/></g><path d="M5 2H12M5 6H12M5 10H12" stroke="#ccc" stroke-width="1"/></svg>
<div class="a" style="left:1612px;top:825px;width:306px;height:19px;background:#424242"></div><svg class="a" style="left:1617px;top:830px" width="9" height="9"><path d="M2 1V8L7 4.5Z" fill="#bbb"/></svg><div class="t" style="left:1630px;top:829px;color:#e0e0e0">Metadata</div><svg class="a" style="left:1902px;top:832px" width="14" height="8"><g fill="#1a1a1a"><rect x="1" y="1" width="1.5" height="1.5"/><rect x="1" y="4" width="1.5" height="1.5"/><rect x="4" y="1" width="1.5" height="1.5"/><rect x="4" y="4" width="1.5" height="1.5"/><rect x="7" y="1" width="1.5" height="1.5"/><rect x="7" y="4" width="1.5" height="1.5"/><rect x="10" y="1" width="1.5" height="1.5"/><rect x="10" y="4" width="1.5" height="1.5"/></g></svg>
<div class="a" style="left:1612px;top:845px;width:306px;height:19px;background:#424242"></div><svg class="a" style="left:1617px;top:850px" width="9" height="9"><path d="M2 1V8L7 4.5Z" fill="#bbb"/></svg><div class="t" style="left:1630px;top:849px;color:#e0e0e0">Post Processing</div><svg class="a" style="left:1902px;top:852px" width="14" height="8"><g fill="#1a1a1a"><rect x="1" y="1" width="1.5" height="1.5"/><rect x="1" y="4" width="1.5" height="1.5"/><rect x="4" y="1" width="1.5" height="1.5"/><rect x="4" y="4" width="1.5" height="1.5"/><rect x="7" y="1" width="1.5" height="1.5"/><rect x="7" y="4" width="1.5" height="1.5"/><rect x="10" y="1" width="1.5" height="1.5"/><rect x="10" y="4" width="1.5" height="1.5"/></g></svg>

<!-- timeline -->
<div class="a" style="left:1px;top:893px;width:1588px;height:124px;background:#333333;border-radius:4px 4px 0 0;overflow:hidden"></div>
<div class="a" style="left:1px;top:893px;width:1588px;height:20px;background:#383838;border-radius:4px 4px 0 0"></div>
<div class="a" style="left:1px;top:913px;width:1588px;height:17px;background:#282828"></div>
<div class="a" style="left:114px;top:930px;width:541px;height:83px;background:#424242"></div>

<div class="a" style="left:26px;top:930px;width:1px;height:83px;background:#313131"></div><div class="a" style="left:53px;top:930px;width:1px;height:83px;background:#313131"></div><div class="a" style="left:81px;top:930px;width:1px;height:83px;background:#313131"></div><div class="a" style="left:108px;top:930px;width:1px;height:83px;background:#313131"></div><div class="a" style="left:135px;top:930px;width:1px;height:83px;background:#3e3e3e"></div><div class="a" style="left:163px;top:930px;width:1px;height:83px;background:#393939"></div><div class="a" style="left:190px;top:930px;width:1px;height:83px;background:#3e3e3e"></div><div class="a" style="left:217px;top:930px;width:1px;height:83px;background:#393939"></div><div class="a" style="left:245px;top:930px;width:1px;height:83px;background:#3e3e3e"></div><div class="a" style="left:272px;top:930px;width:1px;height:83px;background:#393939"></div><div class="a" style="left:299px;top:930px;width:1px;height:83px;background:#3e3e3e"></div><div class="a" style="left:327px;top:930px;width:1px;height:83px;background:#393939"></div><div class="a" style="left:354px;top:930px;width:1px;height:83px;background:#3e3e3e"></div><div class="a" style="left:381px;top:930px;width:1px;height:83px;background:#393939"></div><div class="a" style="left:409px;top:930px;width:1px;height:83px;background:#3e3e3e"></div><div class="a" style="left:436px;top:930px;width:1px;height:83px;background:#393939"></div><div class="a" style="left:463px;top:930px;width:1px;height:83px;background:#3e3e3e"></div><div class="a" style="left:491px;top:930px;width:1px;height:83px;background:#393939"></div><div class="a" style="left:518px;top:930px;width:1px;height:83px;background:#3e3e3e"></div><div class="a" style="left:545px;top:930px;width:1px;height:83px;background:#393939"></div><div class="a" style="left:573px;top:930px;width:1px;height:83px;background:#3e3e3e"></div><div class="a" style="left:600px;top:930px;width:1px;height:83px;background:#393939"></div><div class="a" style="left:627px;top:930px;width:1px;height:83px;background:#3e3e3e"></div><div class="a" style="left:654px;top:930px;width:1px;height:83px;background:#393939"></div><div class="a" style="left:682px;top:930px;width:1px;height:83px;background:#313131"></div><div class="a" style="left:709px;top:930px;width:1px;height:83px;background:#313131"></div><div class="a" style="left:736px;top:930px;width:1px;height:83px;background:#313131"></div><div class="a" style="left:764px;top:930px;width:1px;height:83px;background:#313131"></div><div class="a" style="left:791px;top:930px;width:1px;height:83px;background:#313131"></div><div class="a" style="left:818px;top:930px;width:1px;height:83px;background:#313131"></div><div class="a" style="left:846px;top:930px;width:1px;height:83px;background:#313131"></div><div class="a" style="left:873px;top:930px;width:1px;height:83px;background:#313131"></div><div class="a" style="left:900px;top:930px;width:1px;height:83px;background:#313131"></div><div class="a" style="left:928px;top:930px;width:1px;height:83px;background:#313131"></div><div class="a" style="left:955px;top:930px;width:1px;height:83px;background:#313131"></div><div class="a" style="left:982px;top:930px;width:1px;height:83px;background:#313131"></div><div class="a" style="left:1010px;top:930px;width:1px;height:83px;background:#313131"></div><div class="a" style="left:1037px;top:930px;width:1px;height:83px;background:#313131"></div><div class="a" style="left:1064px;top:930px;width:1px;height:83px;background:#313131"></div><div class="a" style="left:1092px;top:930px;width:1px;height:83px;background:#313131"></div><div class="a" style="left:1119px;top:930px;width:1px;height:83px;background:#313131"></div><div class="a" style="left:1146px;top:930px;width:1px;height:83px;background:#313131"></div><div class="a" style="left:1174px;top:930px;width:1px;height:83px;background:#313131"></div><div class="a" style="left:1201px;top:930px;width:1px;height:83px;background:#313131"></div><div class="a" style="left:1228px;top:930px;width:1px;height:83px;background:#313131"></div><div class="a" style="left:1256px;top:930px;width:1px;height:83px;background:#313131"></div><div class="a" style="left:1283px;top:930px;width:1px;height:83px;background:#313131"></div><div class="a" style="left:1310px;top:930px;width:1px;height:83px;background:#313131"></div><div class="a" style="left:1338px;top:930px;width:1px;height:83px;background:#313131"></div><div class="a" style="left:1365px;top:930px;width:1px;height:83px;background:#313131"></div><div class="a" style="left:1392px;top:930px;width:1px;height:83px;background:#313131"></div><div class="a" style="left:1420px;top:930px;width:1px;height:83px;background:#313131"></div><div class="a" style="left:1447px;top:930px;width:1px;height:83px;background:#313131"></div><div class="a" style="left:1474px;top:930px;width:1px;height:83px;background:#313131"></div><div class="a" style="left:1502px;top:930px;width:1px;height:83px;background:#313131"></div><div class="a" style="left:1529px;top:930px;width:1px;height:83px;background:#313131"></div><div class="a" style="left:1556px;top:930px;width:1px;height:83px;background:#313131"></div><div class="a" style="left:1584px;top:930px;width:1px;height:83px;background:#313131"></div>
<div class="a" style="left:113px;top:930px;width:2px;height:83px;background:#0d0d0d"></div>
<div class="a" style="left:655px;top:930px;width:1px;height:83px;background:#0d0d0d"></div>

<div class="t" style="left:33.2px;top:916px;width:40px;text-align:center;color:#c8c8c8;font-size:9px">-10</div><div class="t" style="left:87.9px;top:916px;width:40px;text-align:center;color:#c8c8c8;font-size:9px">0</div><div class="t" style="left:142.6px;top:916px;width:40px;text-align:center;color:#c8c8c8;font-size:9px">10</div><div class="t" style="left:197.2px;top:916px;width:40px;text-align:center;color:#c8c8c8;font-size:9px">20</div><div class="t" style="left:251.9px;top:916px;width:40px;text-align:center;color:#c8c8c8;font-size:9px">30</div><div class="t" style="left:306.5px;top:916px;width:40px;text-align:center;color:#c8c8c8;font-size:9px">40</div><div class="t" style="left:361.2px;top:916px;width:40px;text-align:center;color:#c8c8c8;font-size:9px">5</div><div class="t" style="left:415.9px;top:916px;width:40px;text-align:center;color:#c8c8c8;font-size:9px">60</div><div class="t" style="left:470.5px;top:916px;width:40px;text-align:center;color:#c8c8c8;font-size:9px">70</div><div class="t" style="left:525.2px;top:916px;width:40px;text-align:center;color:#c8c8c8;font-size:9px">80</div><div class="t" style="left:579.8px;top:916px;width:40px;text-align:center;color:#c8c8c8;font-size:9px">90</div><div class="t" style="left:634.5px;top:916px;width:40px;text-align:center;color:#c8c8c8;font-size:9px">100</div><div class="t" style="left:689.2px;top:916px;width:40px;text-align:center;color:#c8c8c8;font-size:9px">110</div><div class="t" style="left:743.8px;top:916px;width:40px;text-align:center;color:#c8c8c8;font-size:9px">120</div><div class="t" style="left:798.5px;top:916px;width:40px;text-align:center;color:#c8c8c8;font-size:9px">130</div><div class="t" style="left:853.1px;top:916px;width:40px;text-align:center;color:#c8c8c8;font-size:9px">140</div><div class="t" style="left:907.8px;top:916px;width:40px;text-align:center;color:#c8c8c8;font-size:9px">150</div><div class="t" style="left:962.5px;top:916px;width:40px;text-align:center;color:#c8c8c8;font-size:9px">160</div><div class="t" style="left:1017.1px;top:916px;width:40px;text-align:center;color:#c8c8c8;font-size:9px">170</div><div class="t" style="left:1071.8px;top:916px;width:40px;text-align:center;color:#c8c8c8;font-size:9px">180</div><div class="t" style="left:1126.4px;top:916px;width:40px;text-align:center;color:#c8c8c8;font-size:9px">190</div><div class="t" style="left:1181.1px;top:916px;width:40px;text-align:center;color:#c8c8c8;font-size:9px">200</div><div class="t" style="left:1235.8px;top:916px;width:40px;text-align:center;color:#c8c8c8;font-size:9px">210</div><div class="t" style="left:1290.4px;top:916px;width:40px;text-align:center;color:#c8c8c8;font-size:9px">220</div><div class="t" style="left:1345.1px;top:916px;width:40px;text-align:center;color:#c8c8c8;font-size:9px">230</div><div class="t" style="left:1399.7px;top:916px;width:40px;text-align:center;color:#c8c8c8;font-size:9px">240</div><div class="t" style="left:1454.4px;top:916px;width:40px;text-align:center;color:#c8c8c8;font-size:9px">250</div><div class="t" style="left:1509.1px;top:916px;width:40px;text-align:center;color:#c8c8c8;font-size:9px">260</div>
<div class="a" style="left:391.5px;top:928px;width:2px;height:85px;background:#4f84d4"></div>
<div class="a" style="left:384px;top:915px;width:18px;height:14px;background:#4f84d4;border-radius:4px"></div><div class="t" style="left:384px;top:916px;width:18px;text-align:center;color:#fff;font-size:9px">52</div>
<svg class="a" style="left:1px;top:927px" width="6" height="10"><path d="M1 1L4.5 5L1 9" stroke="#888" fill="none"/></svg>
<svg class="a" style="left:1581px;top:927px" width="6" height="10"><path d="M5 1L1.5 5L5 9" stroke="#888" fill="none"/></svg>
<div class="a" style="left:8px;top:1013px;width:1572px;height:4px;background:#595959;border-radius:2px 2px 0 0"></div>
<div class="a" style="left:7px;top:896px;width:25px;height:15px;background:#2b2b2b;border-radius:3px"></div><svg class="a" style="left:9px;top:897px" width="22" height="13"><circle cx="6.5" cy="6.5" r="5.3" fill="#e0e0e0"/><path d="M7.5 3.5L5 6.5L7.5 9.5" stroke="#2b2b2b" stroke-width="1.5" fill="none"/><path d="M14 5L16.5 7.5L19 5" stroke="#ccc" stroke-width="1.1" fill="none"/></svg>
<div class="a" style="left:38px;top:896px;width:51px;height:15px;background:#2b2b2b;border-radius:3px 0 0 3px"></div><div class="t" style="left:43px;top:898px;color:#ddd;font-size:8.6px">Playback</div><svg class="a" style="left:82px;top:901px" width="8" height="6"><path d="M1 1.5L4 4.5L7 1.5" stroke="#ccc" stroke-width="1.1" fill="none"/></svg><div class="a" style="left:90px;top:896px;width:46px;height:15px;background:#2b2b2b;border-radius:0 3px 3px 0"></div><div class="t" style="left:96px;top:898px;color:#ddd;font-size:8.8px">Keying</div><svg class="a" style="left:127px;top:901px" width="8" height="6"><path d="M1 1.5L4 4.5L7 1.5" stroke="#ccc" stroke-width="1.1" fill="none"/></svg>
<div class="t" style="left:145px;top:898px;color:#ddd">View</div><div class="t" style="left:176px;top:898px;color:#ddd">Marker</div>
<div class="a" style="left:718px;top:896px;width:15px;height:15px;background:#545454;border-radius:3px"></div><svg class="a" style="left:718px;top:896px" width="30" height="15"><circle cx="7.5" cy="7.5" r="2.6" fill="#e0e0e0"/><path d="M20 6L22 8L24 6" stroke="#666" fill="none"/></svg>
<div class="a" style="left:755px;top:896px;width:100px;height:15px;background:#545454;border-radius:3px"></div><div class="a" style="left:771px;top:896px;width:1px;height:15px;background:#3a3a3a"></div><div class="a" style="left:787px;top:896px;width:1px;height:15px;background:#3a3a3a"></div><div class="a" style="left:804px;top:896px;width:1px;height:15px;background:#3a3a3a"></div><div class="a" style="left:822px;top:896px;width:1px;height:15px;background:#3a3a3a"></div><div class="a" style="left:838px;top:896px;width:1px;height:15px;background:#3a3a3a"></div><svg class="a" style="left:755px;top:896px" width="100" height="15">
<path d="M5 4V11" stroke="#eee" stroke-width="1.5"/><path d="M11 4V11L6.5 7.5Z" fill="#eee"/>
<path d="M19.5 7.5L22 5L24.5 7.5L22 10Z" fill="#eee"/><path d="M27.5 4.5V10.5L25 7.5Z" fill="#eee"/>
<path d="M44 3.5V11.5L38 7.5Z" fill="#eee"/>
<path d="M55 3.5V11.5L61 7.5Z" fill="#eee"/>
<path d="M72 4.5V10.5L74.5 7.5Z" fill="#eee"/><path d="M75.5 7.5L78 5L80.5 7.5L78 10Z" fill="#eee"/>
<path d="M89 4V11L93.5 7.5Z" fill="#eee"/><path d="M95 4V11" stroke="#eee" stroke-width="1.5"/>
</svg>
<div class="a" style="left:1361px;top:896px;width:61px;height:15px;background:#545454;border-radius:3px"></div><div class="t" style="left:1361px;top:898px;width:61px;text-align:center;color:#e0e0e0">52</div>
<div class="a" style="left:1427px;top:896px;width:156px;height:15px;background:#545454;border-radius:3px"></div><div class="a" style="left:1442px;top:896px;width:1px;height:15px;background:#3d3d3d"></div><div class="a" style="left:1513px;top:896px;width:1px;height:15px;background:#3d3d3d"></div><div class="a" style="left:1427px;top:896px;width:15px;height:15px;background:#4a4a4a;border-radius:3px 0 0 3px"></div><svg class="a" style="left:1428px;top:896px" width="14" height="15"><circle cx="7" cy="8.5" r="4.5" fill="none" stroke="#ddd" stroke-width="1.1"/><path d="M5 2.5H9M7 2.5V4M7 8.5L8.5 6.5" stroke="#ddd" stroke-width="1.1"/></svg><div class="t" style="left:1456px;top:898px;color:#ddd">Start</div><div class="t" style="left:1488px;top:898px;width:14px;text-align:right;color:#e6e6e6">1</div><div class="t" style="left:1528px;top:898px;color:#ddd">End</div><div class="t" style="left:1545px;top:898px;width:28px;text-align:right;color:#e6e6e6">100</div>

</body></html>
